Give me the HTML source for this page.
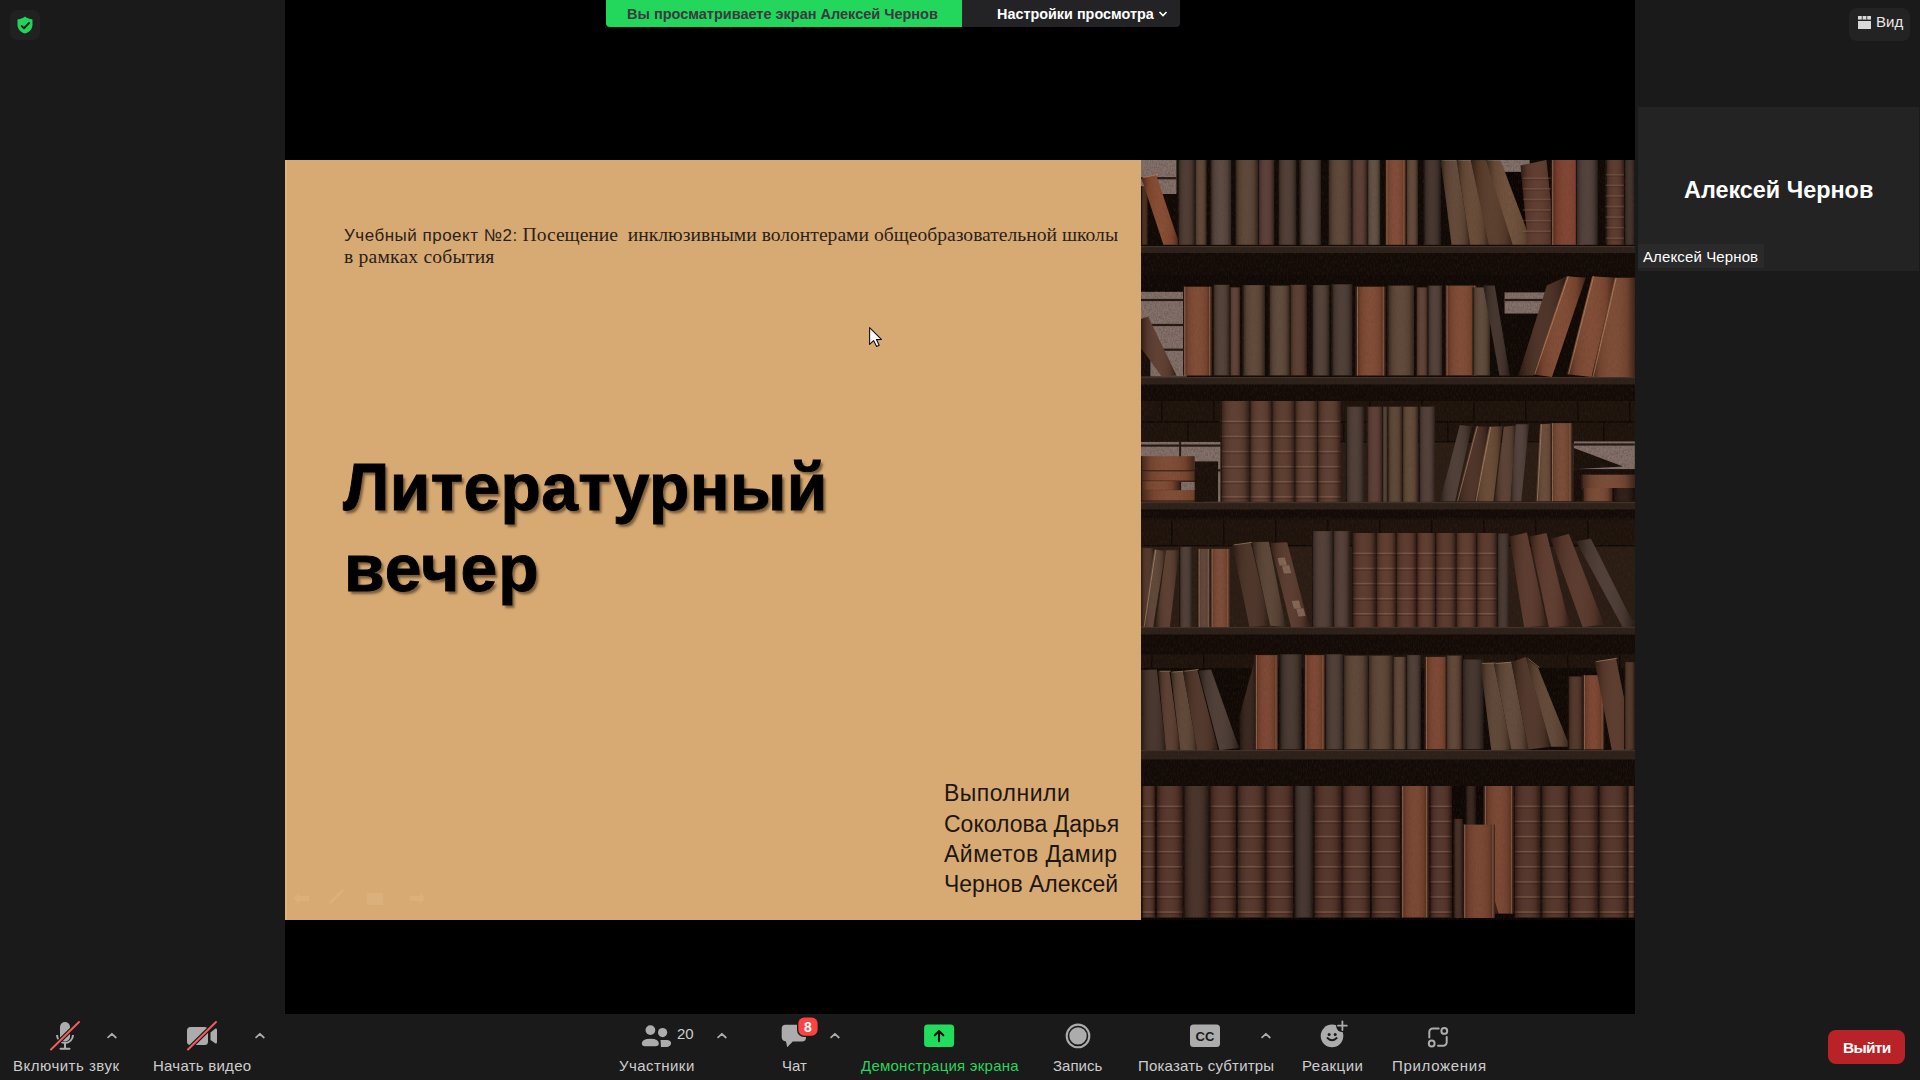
<!DOCTYPE html>
<html><head><meta charset="utf-8">
<style>
*{margin:0;padding:0;box-sizing:border-box}
html,body{width:1920px;height:1080px;overflow:hidden;background:#1a1a1a;font-family:"Liberation Sans",sans-serif}
.abs{position:absolute}
.t{position:absolute;white-space:nowrap;line-height:1}
#screen{left:285px;top:0;width:1350px;height:1014px;background:#000}
#slide{left:285px;top:160px;width:856px;height:760px;background:#d7aa73}
#shelf{left:1141px;top:160px;width:494px;height:760px;background:#2a1c14;overflow:hidden}
.lbl{color:#cdcdcd;font-size:15px}
</style></head><body>

<!-- shield -->
<div class="abs" style="left:10px;top:10px;width:30px;height:30px;border-radius:7px;background:#212121"></div>
<svg class="abs" style="left:16px;top:16px" width="18" height="18" viewBox="0 0 18 18">
<path d="M9 0.6 C7.5 2 5 3.2 1.5 3.5 V8.5 C1.5 13 4.5 16 9 17.6 C13.5 16 16.5 13 16.5 8.5 V3.5 C13 3.2 10.5 2 9 0.6 Z" fill="#23d45a"/>
<path d="M5.7 10 L8 12.2 L13 7" stroke="#1f1f1f" stroke-width="2" fill="none" stroke-linecap="round" stroke-linejoin="round"/>
</svg>

<div id="screen" class="abs"></div>
<div id="slide" class="abs"></div>
<div class="abs" style="left:285px;top:160px;width:2px;height:760px;background:#e2b47a"></div>
<div id="shelf" class="abs"><!--SHELF--><svg width="494" height="760" viewBox="0 0 494 760"><defs><filter id="nz" x="0" y="0" width="100%" height="100%"><feTurbulence type="fractalNoise" baseFrequency="0.8 0.25" numOctaves="2" seed="7"/><feColorMatrix type="matrix" values="0 0 0 0 .08  0 0 0 0 .04  0 0 0 0 .02  -1.2 0 0 0 .75"/></filter><filter id="sp" x="0" y="0" width="100%" height="100%"><feTurbulence type="fractalNoise" baseFrequency="0.55" numOctaves="2" seed="3"/><feColorMatrix type="matrix" values="0 0 0 0 .12  0 0 0 0 .07  0 0 0 0 .05  -2.2 0 0 0 1.25"/></filter><linearGradient id="sh" x1="0" x2="1" y1="0" y2="0"><stop offset="0" stop-color="#000" stop-opacity=".5"/><stop offset=".18" stop-color="#000" stop-opacity=".08"/><stop offset=".5" stop-color="#fff" stop-opacity=".03"/><stop offset=".82" stop-color="#000" stop-opacity=".08"/><stop offset="1" stop-color="#000" stop-opacity=".5"/></linearGradient></defs><rect x="0.0" y="0.0" width="494.0" height="86.0" fill="#0f0805"/><rect x="0.0" y="-0.1" width="35.4" height="34.1" fill="#84726d"/><rect x="0.0" y="-0.1" width="35.4" height="34.1" filter="url(#sp)" opacity=".55"/><rect x="0.0" y="17.1" width="35.4" height="2.2" fill="#241814"/><rect x="0.0" y="26.2" width="6.8" height="58.6" fill="#442a1f"/><rect x="0.0" y="26.2" width="6.8" height="58.6" fill="url(#sh)"/><rect x="0.0" y="26.2" width="1.0" height="58.6" fill="#080403" opacity="0.55"/><polygon points="0.3,17.7 15.1,14.5 38.6,84.8 22.4,84.8" fill="#87492f"/><polygon points="0.3,17.7 15.1,14.5 38.6,84.8 22.4,84.8" fill="url(#sh)"/><line x1="1.8" y1="17.7" x2="16.6" y2="14.5" stroke="#d8b890" stroke-width="1" opacity=".45"/><rect x="36.8" y="-0.1" width="16.9" height="84.9" fill="#4b3930"/><rect x="36.8" y="-0.1" width="16.9" height="84.9" fill="url(#sh)"/><rect x="36.8" y="-0.1" width="1.0" height="84.9" fill="#080403" opacity="0.55"/><rect x="53.7" y="-0.1" width="11.7" height="84.9" fill="#5d4435"/><rect x="53.7" y="-0.1" width="11.7" height="84.9" fill="url(#sh)"/><rect x="53.7" y="-0.1" width="1.0" height="84.9" fill="#080403" opacity="0.55"/><rect x="69.3" y="-0.1" width="20.8" height="84.9" fill="#58463f"/><rect x="69.3" y="-0.1" width="20.8" height="84.9" fill="url(#sh)"/><rect x="69.3" y="-0.1" width="1.0" height="84.9" fill="#080403" opacity="0.55"/><rect x="94.1" y="-0.1" width="22.9" height="84.9" fill="#5b4435"/><rect x="94.1" y="-0.1" width="22.9" height="84.9" fill="url(#sh)"/><rect x="94.1" y="-0.1" width="1.0" height="84.9" fill="#080403" opacity="0.55"/><rect x="117.0" y="-0.1" width="16.1" height="84.9" fill="#583c35"/><rect x="117.0" y="-0.1" width="16.1" height="84.9" fill="url(#sh)"/><rect x="117.0" y="-0.1" width="1.0" height="84.9" fill="#080403" opacity="0.55"/><rect x="137.0" y="-0.1" width="18.2" height="84.9" fill="#4d3b33"/><rect x="137.0" y="-0.1" width="18.2" height="84.9" fill="url(#sh)"/><rect x="137.0" y="-0.1" width="1.0" height="84.9" fill="#080403" opacity="0.55"/><rect x="158.4" y="-0.1" width="21.4" height="84.9" fill="#56443c"/><rect x="158.4" y="-0.1" width="21.4" height="84.9" fill="url(#sh)"/><rect x="158.4" y="-0.1" width="1.0" height="84.9" fill="#080403" opacity="0.55"/><rect x="187.0" y="-0.1" width="23.4" height="84.9" fill="#5b4435"/><rect x="187.0" y="-0.1" width="23.4" height="84.9" fill="url(#sh)"/><rect x="187.0" y="-0.1" width="1.0" height="84.9" fill="#080403" opacity="0.55"/><rect x="210.5" y="-0.1" width="15.6" height="84.9" fill="#583c32"/><rect x="210.5" y="-0.1" width="15.6" height="84.9" fill="url(#sh)"/><rect x="210.5" y="-0.1" width="1.0" height="84.9" fill="#080403" opacity="0.55"/><rect x="226.1" y="-0.1" width="13.0" height="84.9" fill="#604e43"/><rect x="226.1" y="-0.1" width="13.0" height="84.9" fill="url(#sh)"/><rect x="226.1" y="-0.1" width="1.0" height="84.9" fill="#080403" opacity="0.55"/><rect x="244.1" y="-0.1" width="20.8" height="84.9" fill="#804932"/><rect x="244.1" y="-0.1" width="20.8" height="84.9" fill="url(#sh)"/><rect x="245.3" y="-0.1" width="1.2" height="84.9" fill="#be9678" opacity="0.5"/><rect x="262.3" y="-0.1" width="1.2" height="84.9" fill="#be9678" opacity="0.4"/><rect x="244.1" y="-0.1" width="1.0" height="84.9" fill="#080403" opacity="0.55"/><rect x="264.9" y="-0.1" width="12.0" height="84.9" fill="#604635"/><rect x="264.9" y="-0.1" width="12.0" height="84.9" fill="url(#sh)"/><rect x="264.9" y="-0.1" width="1.0" height="84.9" fill="#080403" opacity="0.55"/><rect x="282.3" y="-0.1" width="17.4" height="84.9" fill="#41312b"/><rect x="282.3" y="-0.1" width="17.4" height="84.9" fill="url(#sh)"/><rect x="282.3" y="-0.1" width="1.0" height="84.9" fill="#080403" opacity="0.55"/><rect x="357.9" y="-0.1" width="30.7" height="12.0" fill="#84726d"/><rect x="357.9" y="-0.1" width="30.7" height="12.0" filter="url(#sp)" opacity=".55"/><polygon points="358.4,11.9 388.6,11.9 388.6,84.8 374.0,84.8" fill="#0a0403"/><polygon points="299.8,-0.1 315.7,-0.1 329.2,84.8 310.5,84.8" fill="#604635"/><polygon points="299.8,-0.1 315.7,-0.1 329.2,84.8 310.5,84.8" fill="url(#sh)"/><line x1="301.3" y1="-0.1" x2="317.2" y2="-0.1" stroke="#d8b890" stroke-width="1" opacity=".45"/><polygon points="315.7,-0.1 331.6,-0.1 347.7,84.8 329.2,84.8" fill="#664935"/><polygon points="315.7,-0.1 331.6,-0.1 347.7,84.8 329.2,84.8" fill="url(#sh)"/><line x1="317.2" y1="-0.1" x2="333.1" y2="-0.1" stroke="#d8b890" stroke-width="1" opacity=".45"/><polygon points="329.7,-0.1 345.6,-0.1 373.0,84.8 347.7,84.8" fill="#583b2a"/><polygon points="329.7,-0.1 345.6,-0.1 373.0,84.8 347.7,84.8" fill="url(#sh)"/><polygon points="344.8,-0.1 359.4,-0.1 391.4,84.8 371.7,84.8" fill="#6d4e39"/><polygon points="344.8,-0.1 359.4,-0.1 391.4,84.8 371.7,84.8" fill="url(#sh)"/><line x1="346.3" y1="-0.1" x2="360.9" y2="-0.1" stroke="#d8b890" stroke-width="1" opacity=".45"/><polygon points="379.5,5.4 405.5,-0.1 414.1,84.8 387.0,84.8" fill="#5d392d"/><polygon points="379.5,5.4 405.5,-0.1 414.1,84.8 387.0,84.8" fill="url(#sh)"/><rect x="381.8" y="17.4" width="31.2" height="1.6" fill="#9a765e" opacity="0.3"/><rect x="381.8" y="19.0" width="31.2" height="1.4" fill="#160b06" opacity="0.15"/><rect x="381.8" y="28.0" width="31.2" height="1.6" fill="#9a765e" opacity="0.3"/><rect x="381.8" y="29.6" width="31.2" height="1.4" fill="#160b06" opacity="0.15"/><rect x="381.8" y="38.6" width="31.2" height="1.6" fill="#9a765e" opacity="0.3"/><rect x="381.8" y="40.2" width="31.2" height="1.4" fill="#160b06" opacity="0.15"/><rect x="381.8" y="49.2" width="31.2" height="1.6" fill="#9a765e" opacity="0.3"/><rect x="381.8" y="50.8" width="31.2" height="1.4" fill="#160b06" opacity="0.15"/><rect x="381.8" y="59.8" width="31.2" height="1.6" fill="#9a765e" opacity="0.3"/><rect x="381.8" y="61.4" width="31.2" height="1.4" fill="#160b06" opacity="0.15"/><rect x="381.8" y="70.4" width="31.2" height="1.6" fill="#9a765e" opacity="0.3"/><rect x="381.8" y="72.0" width="31.2" height="1.4" fill="#160b06" opacity="0.15"/><rect x="409.9" y="-0.1" width="33.1" height="84.9" fill="#80412f"/><rect x="409.9" y="-0.1" width="33.1" height="84.9" fill="url(#sh)"/><rect x="411.1" y="-0.1" width="1.2" height="84.9" fill="#be9678" opacity="0.5"/><rect x="440.4" y="-0.1" width="1.2" height="84.9" fill="#be9678" opacity="0.4"/><rect x="409.9" y="-0.1" width="1.0" height="84.9" fill="#080403" opacity="0.55"/><rect x="434.9" y="-0.1" width="21.6" height="84.9" fill="#4f3e39"/><rect x="434.9" y="-0.1" width="21.6" height="84.9" fill="url(#sh)"/><rect x="434.9" y="-0.1" width="1.0" height="84.9" fill="#080403" opacity="0.55"/><rect x="464.6" y="-0.1" width="18.5" height="84.9" fill="#59372b"/><rect x="464.6" y="-0.1" width="18.5" height="84.9" fill="url(#sh)"/><rect x="464.6" y="-0.1" width="1.0" height="84.9" fill="#080403" opacity="0.55"/><rect x="464.6" y="13.9" width="18.5" height="1.6" fill="#9a765e" opacity="0.3"/><rect x="464.6" y="15.5" width="18.5" height="1.4" fill="#160b06" opacity="0.15"/><rect x="464.6" y="24.5" width="18.5" height="1.6" fill="#9a765e" opacity="0.3"/><rect x="464.6" y="26.1" width="18.5" height="1.4" fill="#160b06" opacity="0.15"/><rect x="464.6" y="35.1" width="18.5" height="1.6" fill="#9a765e" opacity="0.3"/><rect x="464.6" y="36.7" width="18.5" height="1.4" fill="#160b06" opacity="0.15"/><rect x="464.6" y="45.7" width="18.5" height="1.6" fill="#9a765e" opacity="0.3"/><rect x="464.6" y="47.3" width="18.5" height="1.4" fill="#160b06" opacity="0.15"/><rect x="464.6" y="56.3" width="18.5" height="1.6" fill="#9a765e" opacity="0.3"/><rect x="464.6" y="57.9" width="18.5" height="1.4" fill="#160b06" opacity="0.15"/><rect x="464.6" y="66.9" width="18.5" height="1.6" fill="#9a765e" opacity="0.3"/><rect x="464.6" y="68.5" width="18.5" height="1.4" fill="#160b06" opacity="0.15"/><rect x="464.6" y="77.5" width="18.5" height="1.6" fill="#9a765e" opacity="0.3"/><rect x="464.6" y="79.1" width="18.5" height="1.4" fill="#160b06" opacity="0.15"/><rect x="483.1" y="-0.1" width="10.7" height="84.9" fill="#3d2d28"/><rect x="483.1" y="-0.1" width="10.7" height="84.9" fill="url(#sh)"/><rect x="483.1" y="-0.1" width="1.0" height="84.9" fill="#080403" opacity="0.55"/><rect x="0.0" y="86.0" width="494.0" height="7.0" fill="#2c201a"/><rect x="0.0" y="86.0" width="494.0" height="1.2" fill="#413128"/><rect x="0.0" y="93.0" width="494.0" height="22.0" fill="#120a07"/><rect x="0.0" y="115.0" width="494.0" height="102.0" fill="#0f0805"/><rect x="0.0" y="131.9" width="45.8" height="84.6" fill="#84726d"/><rect x="0.0" y="131.9" width="45.8" height="84.6" filter="url(#sp)" opacity=".55"/><rect x="0.0" y="138.9" width="45.8" height="2.2" fill="#241814"/><rect x="0.0" y="163.9" width="45.8" height="2.2" fill="#241814"/><rect x="0.0" y="188.6" width="45.8" height="2.2" fill="#241814"/><rect x="0.0" y="177.7" width="9.4" height="38.8" fill="#160d0a"/><polygon points="0.0,159.0 7.1,156.6 35.5,215.5 20.9,216.8 0.0,188.1" fill="#5d3c2f"/><polygon points="0.0,159.0 7.1,156.6 35.5,215.5 20.9,216.8 0.0,188.1" fill="url(#sh)"/><rect x="42.0" y="126.7" width="28.6" height="88.8" fill="#804932"/><rect x="42.0" y="126.7" width="28.6" height="88.8" fill="url(#sh)"/><rect x="43.2" y="126.7" width="1.2" height="88.8" fill="#be9678" opacity="0.5"/><rect x="68.0" y="126.7" width="1.2" height="88.8" fill="#be9678" opacity="0.4"/><rect x="42.0" y="126.7" width="1.0" height="88.8" fill="#080403" opacity="0.55"/><rect x="71.9" y="124.8" width="16.7" height="90.6" fill="#4f3e34"/><rect x="71.9" y="124.8" width="16.7" height="90.6" fill="url(#sh)"/><rect x="71.9" y="124.8" width="1.0" height="90.6" fill="#080403" opacity="0.55"/><rect x="88.6" y="127.4" width="10.4" height="88.0" fill="#5d3f34"/><rect x="88.6" y="127.4" width="10.4" height="88.0" fill="url(#sh)"/><rect x="88.6" y="127.4" width="1.0" height="88.0" fill="#080403" opacity="0.55"/><rect x="101.6" y="125.1" width="22.1" height="90.4" fill="#5d4637"/><rect x="101.6" y="125.1" width="22.1" height="90.4" fill="url(#sh)"/><rect x="101.6" y="125.1" width="1.0" height="90.4" fill="#080403" opacity="0.55"/><rect x="127.9" y="125.6" width="20.8" height="89.8" fill="#5d483a"/><rect x="127.9" y="125.6" width="20.8" height="89.8" fill="url(#sh)"/><rect x="127.9" y="125.6" width="1.0" height="89.8" fill="#080403" opacity="0.55"/><rect x="148.7" y="124.8" width="16.9" height="90.6" fill="#593b2f"/><rect x="148.7" y="124.8" width="16.9" height="90.6" fill="url(#sh)"/><rect x="148.7" y="124.8" width="1.0" height="90.6" fill="#080403" opacity="0.55"/><rect x="170.9" y="125.1" width="17.4" height="90.4" fill="#4f3e34"/><rect x="170.9" y="125.1" width="17.4" height="90.4" fill="url(#sh)"/><rect x="170.9" y="125.1" width="1.0" height="90.4" fill="#080403" opacity="0.55"/><rect x="190.4" y="124.3" width="20.8" height="91.1" fill="#4b3b34"/><rect x="190.4" y="124.3" width="20.8" height="91.1" fill="url(#sh)"/><rect x="190.4" y="124.3" width="1.0" height="91.1" fill="#080403" opacity="0.55"/><rect x="214.6" y="126.7" width="29.7" height="88.8" fill="#804932"/><rect x="214.6" y="126.7" width="29.7" height="88.8" fill="url(#sh)"/><rect x="215.8" y="126.7" width="1.2" height="88.8" fill="#be9678" opacity="0.5"/><rect x="241.7" y="126.7" width="1.2" height="88.8" fill="#be9678" opacity="0.4"/><rect x="214.6" y="126.7" width="1.0" height="88.8" fill="#080403" opacity="0.55"/><rect x="246.4" y="125.6" width="26.6" height="89.8" fill="#5d4637"/><rect x="246.4" y="125.6" width="26.6" height="89.8" fill="url(#sh)"/><rect x="246.4" y="125.6" width="1.0" height="89.8" fill="#080403" opacity="0.55"/><rect x="275.0" y="127.4" width="11.5" height="88.0" fill="#5d3f34"/><rect x="275.0" y="127.4" width="11.5" height="88.0" fill="url(#sh)"/><rect x="275.0" y="127.4" width="1.0" height="88.0" fill="#080403" opacity="0.55"/><rect x="286.5" y="125.6" width="14.6" height="89.8" fill="#4f3e37"/><rect x="286.5" y="125.6" width="14.6" height="89.8" fill="url(#sh)"/><rect x="286.5" y="125.6" width="1.0" height="89.8" fill="#080403" opacity="0.55"/><rect x="304.2" y="125.6" width="31.2" height="89.8" fill="#804932"/><rect x="304.2" y="125.6" width="31.2" height="89.8" fill="url(#sh)"/><rect x="305.4" y="125.6" width="1.2" height="89.8" fill="#be9678" opacity="0.5"/><rect x="332.9" y="125.6" width="1.2" height="89.8" fill="#be9678" opacity="0.4"/><rect x="304.2" y="125.6" width="1.0" height="89.8" fill="#080403" opacity="0.55"/><rect x="331.6" y="127.4" width="17.4" height="88.0" fill="#5d4839"/><rect x="331.6" y="127.4" width="17.4" height="88.0" fill="url(#sh)"/><rect x="331.6" y="127.4" width="1.0" height="88.0" fill="#080403" opacity="0.55"/><polygon points="342.2,125.6 353.7,125.6 368.8,215.5 358.4,215.5" fill="#41312b"/><polygon points="342.2,125.6 353.7,125.6 368.8,215.5 358.4,215.5" fill="url(#sh)"/><rect x="363.6" y="132.4" width="41.1" height="21.1" fill="#84726d"/><rect x="363.6" y="132.4" width="41.1" height="21.1" filter="url(#sp)" opacity=".55"/><rect x="363.6" y="138.9" width="41.1" height="2.2" fill="#241814"/><polygon points="377.4,215.5 405.8,125.6 425.8,116.2 392.2,215.5" fill="#4a2f24"/><polygon points="377.4,215.5 405.8,125.6 425.8,116.2 392.2,215.5" fill="url(#sh)"/><polygon points="392.2,214.4 425.8,116.2 444.6,117.8 411.0,217.0" fill="#804932"/><polygon points="392.2,214.4 425.8,116.2 444.6,117.8 411.0,217.0" fill="url(#sh)"/><line x1="393.7" y1="214.4" x2="427.3" y2="116.2" stroke="#d8b890" stroke-width="1" opacity=".45"/><polygon points="426.1,214.2 451.1,116.2 473.7,117.8 450.6,217.0" fill="#804932"/><polygon points="426.1,214.2 451.1,116.2 473.7,117.8 450.6,217.0" fill="url(#sh)"/><line x1="427.6" y1="214.2" x2="452.6" y2="116.2" stroke="#d8b890" stroke-width="1" opacity=".45"/><polygon points="450.6,217.0 473.7,117.8 493.8,117.8 493.8,217.0" fill="#7c4932"/><polygon points="450.6,217.0 473.7,117.8 493.8,117.8 493.8,217.0" fill="url(#sh)"/><line x1="452.1" y1="217.0" x2="475.2" y2="117.8" stroke="#d8b890" stroke-width="1" opacity=".45"/><rect x="0.0" y="217.0" width="494.0" height="7.5" fill="#2c201a"/><rect x="0.0" y="217.0" width="494.0" height="1.2" fill="#413128"/><rect x="0.0" y="224.5" width="494.0" height="16.5" fill="#120a07"/><rect x="0.0" y="241.0" width="494.0" height="41.0" fill="#180e0b"/><rect x="0.0" y="241.0" width="494.0" height="20.0" fill="#1d120c"/><rect x="20.0" y="241.0" width="1.5" height="20.0" fill="#0f0805"/><rect x="72.0" y="241.0" width="1.5" height="20.0" fill="#0f0805"/><rect x="124.0" y="241.0" width="1.5" height="20.0" fill="#0f0805"/><rect x="176.0" y="241.0" width="1.5" height="20.0" fill="#0f0805"/><rect x="228.0" y="241.0" width="1.5" height="20.0" fill="#0f0805"/><rect x="280.0" y="241.0" width="1.5" height="20.0" fill="#0f0805"/><rect x="332.0" y="241.0" width="1.5" height="20.0" fill="#0f0805"/><rect x="384.0" y="241.0" width="1.5" height="20.0" fill="#0f0805"/><rect x="436.0" y="241.0" width="1.5" height="20.0" fill="#0f0805"/><rect x="488.0" y="241.0" width="1.5" height="20.0" fill="#0f0805"/><rect x="0.0" y="261.0" width="494.0" height="1.5" fill="#0f0805"/><rect x="0.0" y="263.0" width="494.0" height="18.0" fill="#1d120c"/><rect x="46.0" y="263.0" width="1.5" height="18.0" fill="#0f0805"/><rect x="98.0" y="263.0" width="1.5" height="18.0" fill="#0f0805"/><rect x="150.0" y="263.0" width="1.5" height="18.0" fill="#0f0805"/><rect x="202.0" y="263.0" width="1.5" height="18.0" fill="#0f0805"/><rect x="254.0" y="263.0" width="1.5" height="18.0" fill="#0f0805"/><rect x="306.0" y="263.0" width="1.5" height="18.0" fill="#0f0805"/><rect x="358.0" y="263.0" width="1.5" height="18.0" fill="#0f0805"/><rect x="410.0" y="263.0" width="1.5" height="18.0" fill="#0f0805"/><rect x="462.0" y="263.0" width="1.5" height="18.0" fill="#0f0805"/><rect x="0.0" y="281.0" width="494.0" height="1.5" fill="#0f0805"/><rect x="0.0" y="281.9" width="79.7" height="59.9" fill="#84726d"/><rect x="0.0" y="281.9" width="79.7" height="59.9" filter="url(#sp)" opacity=".55"/><rect x="0.0" y="284.5" width="79.7" height="2.2" fill="#241814"/><rect x="0.0" y="309.2" width="79.7" height="2.2" fill="#241814"/><rect x="38.1" y="281.9" width="2.0" height="59.9" fill="#241814"/><rect x="0.0" y="296.2" width="53.6" height="15.4" fill="#804932"/><rect x="0.0" y="296.2" width="53.6" height="15.4" fill="url(#sh)"/><rect x="0.0" y="296.2" width="1.0" height="15.4" fill="#080403" opacity="0.55"/><rect x="0.0" y="310.1" width="53.6" height="1.5" fill="#24130d" opacity="0.7"/><rect x="0.0" y="311.6" width="56.2" height="10.4" fill="#804932"/><rect x="0.0" y="311.6" width="56.2" height="10.4" fill="url(#sh)"/><rect x="0.0" y="311.6" width="1.0" height="10.4" fill="#080403" opacity="0.55"/><rect x="0.0" y="320.5" width="56.2" height="1.5" fill="#24130d" opacity="0.7"/><rect x="0.0" y="321.2" width="38.0" height="10.2" fill="#804932"/><rect x="0.0" y="321.2" width="38.0" height="10.2" fill="url(#sh)"/><rect x="0.0" y="321.2" width="1.0" height="10.2" fill="#080403" opacity="0.55"/><rect x="0.0" y="329.9" width="38.0" height="1.5" fill="#24130d" opacity="0.7"/><rect x="0.0" y="330.1" width="62.8" height="11.7" fill="#804932"/><rect x="0.0" y="330.1" width="62.8" height="11.7" fill="url(#sh)"/><rect x="0.0" y="330.1" width="1.0" height="11.7" fill="#080403" opacity="0.55"/><rect x="0.0" y="340.3" width="62.8" height="1.5" fill="#24130d" opacity="0.7"/><rect x="53.7" y="301.4" width="23.4" height="40.4" fill="#1a100b"/><rect x="79.7" y="241.0" width="28.6" height="100.8" fill="#5b3b2f"/><rect x="79.7" y="260.6" width="28.6" height="1.6" fill="#9a765e" opacity="0.45"/><rect x="79.7" y="262.2" width="28.6" height="1.4" fill="#160b06" opacity="0.225"/><rect x="79.7" y="275.7" width="28.6" height="1.6" fill="#9a765e" opacity="0.45"/><rect x="79.7" y="277.3" width="28.6" height="1.4" fill="#160b06" opacity="0.225"/><rect x="79.7" y="290.8" width="28.6" height="1.6" fill="#9a765e" opacity="0.45"/><rect x="79.7" y="292.4" width="28.6" height="1.4" fill="#160b06" opacity="0.225"/><rect x="79.7" y="305.9" width="28.6" height="1.6" fill="#9a765e" opacity="0.45"/><rect x="79.7" y="307.5" width="28.6" height="1.4" fill="#160b06" opacity="0.225"/><rect x="79.7" y="321.0" width="28.6" height="1.6" fill="#9a765e" opacity="0.45"/><rect x="79.7" y="322.6" width="28.6" height="1.4" fill="#160b06" opacity="0.225"/><rect x="79.7" y="336.1" width="28.6" height="1.6" fill="#9a765e" opacity="0.45"/><rect x="79.7" y="337.7" width="28.6" height="1.4" fill="#160b06" opacity="0.225"/><rect x="79.7" y="241.0" width="28.6" height="100.8" fill="url(#sh)"/><rect x="79.7" y="241.0" width="1.0" height="100.8" fill="#080403" opacity="0.55"/><rect x="108.4" y="241.0" width="22.1" height="100.8" fill="#5d3c30"/><rect x="108.4" y="260.6" width="22.1" height="1.6" fill="#9a765e" opacity="0.45"/><rect x="108.4" y="262.2" width="22.1" height="1.4" fill="#160b06" opacity="0.225"/><rect x="108.4" y="275.7" width="22.1" height="1.6" fill="#9a765e" opacity="0.45"/><rect x="108.4" y="277.3" width="22.1" height="1.4" fill="#160b06" opacity="0.225"/><rect x="108.4" y="290.8" width="22.1" height="1.6" fill="#9a765e" opacity="0.45"/><rect x="108.4" y="292.4" width="22.1" height="1.4" fill="#160b06" opacity="0.225"/><rect x="108.4" y="305.9" width="22.1" height="1.6" fill="#9a765e" opacity="0.45"/><rect x="108.4" y="307.5" width="22.1" height="1.4" fill="#160b06" opacity="0.225"/><rect x="108.4" y="321.0" width="22.1" height="1.6" fill="#9a765e" opacity="0.45"/><rect x="108.4" y="322.6" width="22.1" height="1.4" fill="#160b06" opacity="0.225"/><rect x="108.4" y="336.1" width="22.1" height="1.6" fill="#9a765e" opacity="0.45"/><rect x="108.4" y="337.7" width="22.1" height="1.4" fill="#160b06" opacity="0.225"/><rect x="108.4" y="241.0" width="22.1" height="100.8" fill="url(#sh)"/><rect x="108.4" y="241.0" width="1.0" height="100.8" fill="#080403" opacity="0.55"/><rect x="130.5" y="241.0" width="22.9" height="100.8" fill="#59392d"/><rect x="130.5" y="260.6" width="22.9" height="1.6" fill="#9a765e" opacity="0.45"/><rect x="130.5" y="262.2" width="22.9" height="1.4" fill="#160b06" opacity="0.225"/><rect x="130.5" y="275.7" width="22.9" height="1.6" fill="#9a765e" opacity="0.45"/><rect x="130.5" y="277.3" width="22.9" height="1.4" fill="#160b06" opacity="0.225"/><rect x="130.5" y="290.8" width="22.9" height="1.6" fill="#9a765e" opacity="0.45"/><rect x="130.5" y="292.4" width="22.9" height="1.4" fill="#160b06" opacity="0.225"/><rect x="130.5" y="305.9" width="22.9" height="1.6" fill="#9a765e" opacity="0.45"/><rect x="130.5" y="307.5" width="22.9" height="1.4" fill="#160b06" opacity="0.225"/><rect x="130.5" y="321.0" width="22.9" height="1.6" fill="#9a765e" opacity="0.45"/><rect x="130.5" y="322.6" width="22.9" height="1.4" fill="#160b06" opacity="0.225"/><rect x="130.5" y="336.1" width="22.9" height="1.6" fill="#9a765e" opacity="0.45"/><rect x="130.5" y="337.7" width="22.9" height="1.4" fill="#160b06" opacity="0.225"/><rect x="130.5" y="241.0" width="22.9" height="100.8" fill="url(#sh)"/><rect x="130.5" y="241.0" width="1.0" height="100.8" fill="#080403" opacity="0.55"/><rect x="153.4" y="241.0" width="22.7" height="100.8" fill="#5d3c30"/><rect x="153.4" y="260.6" width="22.7" height="1.6" fill="#9a765e" opacity="0.45"/><rect x="153.4" y="262.2" width="22.7" height="1.4" fill="#160b06" opacity="0.225"/><rect x="153.4" y="275.7" width="22.7" height="1.6" fill="#9a765e" opacity="0.45"/><rect x="153.4" y="277.3" width="22.7" height="1.4" fill="#160b06" opacity="0.225"/><rect x="153.4" y="290.8" width="22.7" height="1.6" fill="#9a765e" opacity="0.45"/><rect x="153.4" y="292.4" width="22.7" height="1.4" fill="#160b06" opacity="0.225"/><rect x="153.4" y="305.9" width="22.7" height="1.6" fill="#9a765e" opacity="0.45"/><rect x="153.4" y="307.5" width="22.7" height="1.4" fill="#160b06" opacity="0.225"/><rect x="153.4" y="321.0" width="22.7" height="1.6" fill="#9a765e" opacity="0.45"/><rect x="153.4" y="322.6" width="22.7" height="1.4" fill="#160b06" opacity="0.225"/><rect x="153.4" y="336.1" width="22.7" height="1.6" fill="#9a765e" opacity="0.45"/><rect x="153.4" y="337.7" width="22.7" height="1.4" fill="#160b06" opacity="0.225"/><rect x="153.4" y="241.0" width="22.7" height="100.8" fill="url(#sh)"/><rect x="153.4" y="241.0" width="1.0" height="100.8" fill="#080403" opacity="0.55"/><rect x="176.1" y="241.0" width="23.4" height="100.8" fill="#5b3b2f"/><rect x="176.1" y="260.6" width="23.4" height="1.6" fill="#9a765e" opacity="0.45"/><rect x="176.1" y="262.2" width="23.4" height="1.4" fill="#160b06" opacity="0.225"/><rect x="176.1" y="275.7" width="23.4" height="1.6" fill="#9a765e" opacity="0.45"/><rect x="176.1" y="277.3" width="23.4" height="1.4" fill="#160b06" opacity="0.225"/><rect x="176.1" y="290.8" width="23.4" height="1.6" fill="#9a765e" opacity="0.45"/><rect x="176.1" y="292.4" width="23.4" height="1.4" fill="#160b06" opacity="0.225"/><rect x="176.1" y="305.9" width="23.4" height="1.6" fill="#9a765e" opacity="0.45"/><rect x="176.1" y="307.5" width="23.4" height="1.4" fill="#160b06" opacity="0.225"/><rect x="176.1" y="321.0" width="23.4" height="1.6" fill="#9a765e" opacity="0.45"/><rect x="176.1" y="322.6" width="23.4" height="1.4" fill="#160b06" opacity="0.225"/><rect x="176.1" y="336.1" width="23.4" height="1.6" fill="#9a765e" opacity="0.45"/><rect x="176.1" y="337.7" width="23.4" height="1.4" fill="#160b06" opacity="0.225"/><rect x="176.1" y="241.0" width="23.4" height="100.8" fill="url(#sh)"/><rect x="176.1" y="241.0" width="1.0" height="100.8" fill="#080403" opacity="0.55"/><rect x="204.7" y="246.7" width="18.2" height="95.1" fill="#4b3b34"/><rect x="204.7" y="246.7" width="18.2" height="95.1" fill="url(#sh)"/><rect x="204.7" y="246.7" width="1.0" height="95.1" fill="#080403" opacity="0.55"/><rect x="225.6" y="246.7" width="15.6" height="95.1" fill="#593c34"/><rect x="225.6" y="246.7" width="15.6" height="95.1" fill="url(#sh)"/><rect x="225.6" y="246.7" width="1.0" height="95.1" fill="#080403" opacity="0.55"/><rect x="241.2" y="246.7" width="5.2" height="95.1" fill="#523c32"/><rect x="241.2" y="246.7" width="5.2" height="95.1" fill="url(#sh)"/><rect x="241.2" y="246.7" width="1.0" height="95.1" fill="#080403" opacity="0.55"/><rect x="246.4" y="246.7" width="14.6" height="95.1" fill="#5b4435"/><rect x="246.4" y="246.7" width="14.6" height="95.1" fill="url(#sh)"/><rect x="246.4" y="246.7" width="1.0" height="95.1" fill="#080403" opacity="0.55"/><rect x="261.0" y="246.7" width="15.9" height="95.1" fill="#604835"/><rect x="261.0" y="246.7" width="15.9" height="95.1" fill="url(#sh)"/><rect x="261.0" y="246.7" width="1.0" height="95.1" fill="#080403" opacity="0.55"/><rect x="277.9" y="246.7" width="15.9" height="95.1" fill="#4f3c37"/><rect x="277.9" y="246.7" width="15.9" height="95.1" fill="url(#sh)"/><rect x="277.9" y="246.7" width="1.0" height="95.1" fill="#080403" opacity="0.55"/><polygon points="299.0,341.2 318.8,264.9 330.8,266.2 314.1,341.2" fill="#4b3b34"/><polygon points="299.0,341.2 318.8,264.9 330.8,266.2 314.1,341.2" fill="url(#sh)"/><polygon points="315.1,341.2 334.9,266.2 348.2,266.8 333.6,341.2" fill="#4a2f24"/><polygon points="315.1,341.2 334.9,266.2 348.2,266.8 333.6,341.2" fill="url(#sh)"/><line x1="316.6" y1="341.2" x2="336.4" y2="266.2" stroke="#d8b890" stroke-width="1" opacity=".45"/><polygon points="333.6,341.2 348.2,266.8 361.5,266.2 352.4,341.2" fill="#674934"/><polygon points="333.6,341.2 348.2,266.8 361.5,266.2 352.4,341.2" fill="url(#sh)"/><line x1="335.1" y1="341.2" x2="349.7" y2="266.8" stroke="#d8b890" stroke-width="1" opacity=".45"/><polygon points="353.7,341.2 362.8,266.8 374.8,265.5 369.6,341.2" fill="#593e32"/><polygon points="353.7,341.2 362.8,266.8 374.8,265.5 369.6,341.2" fill="url(#sh)"/><polygon points="369.6,341.2 374.8,264.2 388.1,264.2 380.2,341.2" fill="#4f3e39"/><polygon points="369.6,341.2 374.8,264.2 388.1,264.2 380.2,341.2" fill="url(#sh)"/><polygon points="394.8,341.2 399.0,264.2 412.3,263.6 411.0,341.2" fill="#674935"/><polygon points="394.8,341.2 399.0,264.2 412.3,263.6 411.0,341.2" fill="url(#sh)"/><line x1="396.3" y1="341.2" x2="400.5" y2="264.2" stroke="#d8b890" stroke-width="1" opacity=".45"/><rect x="409.7" y="263.1" width="21.4" height="78.1" fill="#794934"/><rect x="409.7" y="263.1" width="21.4" height="78.1" fill="url(#sh)"/><rect x="410.9" y="263.1" width="1.2" height="78.1" fill="#be9678" opacity="0.5"/><rect x="428.4" y="263.1" width="1.2" height="78.1" fill="#be9678" opacity="0.4"/><rect x="409.7" y="263.1" width="1.0" height="78.1" fill="#080403" opacity="0.55"/><rect x="432.9" y="281.4" width="60.9" height="27.9" fill="#84726d"/><rect x="432.9" y="281.4" width="60.9" height="27.9" filter="url(#sp)" opacity=".55"/><rect x="432.9" y="283.4" width="60.9" height="2.2" fill="#241814"/><polygon points="432.9,288.1 482.1,306.6 432.9,309.2" fill="#1a100b"/><rect x="432.9" y="309.2" width="60.9" height="32.0" fill="#160d0a"/><rect x="440.4" y="314.7" width="53.4" height="14.1" fill="#794934"/><rect x="440.4" y="314.7" width="53.4" height="14.1" fill="url(#sh)"/><rect x="440.4" y="314.7" width="1.0" height="14.1" fill="#080403" opacity="0.55"/><rect x="441.7" y="328.0" width="29.9" height="13.3" fill="#794934"/><rect x="441.7" y="328.0" width="29.9" height="13.3" fill="url(#sh)"/><rect x="441.7" y="328.0" width="1.0" height="13.3" fill="#080403" opacity="0.55"/><rect x="471.7" y="328.0" width="22.1" height="13.3" fill="#281812"/><rect x="471.7" y="328.0" width="22.1" height="13.3" fill="url(#sh)"/><rect x="471.7" y="328.0" width="1.0" height="13.3" fill="#080403" opacity="0.55"/><rect x="0.0" y="342.0" width="494.0" height="7.5" fill="#2c201a"/><rect x="0.0" y="342.0" width="494.0" height="1.2" fill="#413128"/><rect x="0.0" y="349.5" width="494.0" height="8.5" fill="#120a07"/><rect x="0.0" y="358.0" width="494.0" height="28.0" fill="#180e0b"/><rect x="0.0" y="360.0" width="494.0" height="25.0" fill="#1d120c"/><rect x="30.0" y="360.0" width="1.5" height="25.0" fill="#0f0805"/><rect x="82.0" y="360.0" width="1.5" height="25.0" fill="#0f0805"/><rect x="134.0" y="360.0" width="1.5" height="25.0" fill="#0f0805"/><rect x="186.0" y="360.0" width="1.5" height="25.0" fill="#0f0805"/><rect x="238.0" y="360.0" width="1.5" height="25.0" fill="#0f0805"/><rect x="290.0" y="360.0" width="1.5" height="25.0" fill="#0f0805"/><rect x="342.0" y="360.0" width="1.5" height="25.0" fill="#0f0805"/><rect x="394.0" y="360.0" width="1.5" height="25.0" fill="#0f0805"/><rect x="446.0" y="360.0" width="1.5" height="25.0" fill="#0f0805"/><rect x="0.0" y="385.0" width="494.0" height="1.5" fill="#0f0805"/><polygon points="0.0,388.1 12.0,388.3 13.3,467.0 0.0,467.0" fill="#4f3428"/><polygon points="0.0,388.1 12.0,388.3 13.3,467.0 0.0,467.0" fill="url(#sh)"/><polygon points="1.6,467.0 13.3,389.6 24.5,390.9 12.0,467.0" fill="#5d4435"/><polygon points="1.6,467.0 13.3,389.6 24.5,390.9 12.0,467.0" fill="url(#sh)"/><line x1="3.1" y1="467.0" x2="14.8" y2="389.6" stroke="#d8b890" stroke-width="1" opacity=".45"/><polygon points="14.6,467.0 25.0,390.2 38.1,390.2 28.9,467.0" fill="#593c2f"/><polygon points="14.6,467.0 25.0,390.2 38.1,390.2 28.9,467.0" fill="url(#sh)"/><rect x="38.1" y="386.8" width="13.0" height="80.2" fill="#4b3b34"/><rect x="38.1" y="386.8" width="13.0" height="80.2" fill="url(#sh)"/><rect x="38.1" y="386.8" width="1.0" height="80.2" fill="#080403" opacity="0.55"/><rect x="56.3" y="388.9" width="13.0" height="78.1" fill="#5d4435"/><rect x="56.3" y="388.9" width="13.0" height="78.1" fill="url(#sh)"/><rect x="57.5" y="388.9" width="1.2" height="78.1" fill="#be9678" opacity="0.5"/><rect x="66.7" y="388.9" width="1.2" height="78.1" fill="#be9678" opacity="0.4"/><rect x="56.3" y="388.9" width="1.0" height="78.1" fill="#080403" opacity="0.55"/><rect x="69.3" y="388.9" width="19.5" height="78.1" fill="#7c4934"/><rect x="69.3" y="388.9" width="19.5" height="78.1" fill="url(#sh)"/><rect x="70.5" y="388.9" width="1.2" height="78.1" fill="#be9678" opacity="0.5"/><rect x="86.2" y="388.9" width="1.2" height="78.1" fill="#be9678" opacity="0.4"/><rect x="69.3" y="388.9" width="1.0" height="78.1" fill="#080403" opacity="0.55"/><polygon points="91.4,384.9 109.7,382.3 129.2,465.7 108.4,467.0" fill="#4a3126"/><polygon points="91.4,384.9 109.7,382.3 129.2,465.7 108.4,467.0" fill="url(#sh)"/><line x1="92.9" y1="384.9" x2="111.2" y2="382.3" stroke="#d8b890" stroke-width="1" opacity=".45"/><polygon points="111.0,382.3 127.9,381.8 144.8,467.0 129.2,465.7" fill="#594335"/><polygon points="111.0,382.3 127.9,381.8 144.8,467.0 129.2,465.7" fill="url(#sh)"/><polygon points="129.2,383.1 146.1,382.3 168.3,467.0 150.0,467.0" fill="#58392d"/><polygon points="129.2,383.1 146.1,382.3 168.3,467.0 150.0,467.0" fill="url(#sh)"/><polygon points="136.5,398.0 143.8,397.4 145.9,405.3 138.6,405.8" fill="#a18673" opacity="0.6"/><polygon points="140.9,405.8 148.2,405.3 150.3,413.1 143.0,413.6" fill="#a18673" opacity="0.6"/><polygon points="150.8,440.9 158.1,440.4 160.2,448.2 152.9,448.8" fill="#a18673" opacity="0.6"/><polygon points="155.2,448.8 162.5,448.2 164.6,456.0 157.3,456.6" fill="#a18673" opacity="0.6"/><rect x="170.9" y="371.1" width="20.8" height="95.8" fill="#4f3c35"/><rect x="170.9" y="371.1" width="20.8" height="95.8" fill="url(#sh)"/><rect x="170.9" y="371.1" width="1.0" height="95.8" fill="#080403" opacity="0.55"/><rect x="191.7" y="371.1" width="16.9" height="95.8" fill="#523c35"/><rect x="191.7" y="371.1" width="16.9" height="95.8" fill="url(#sh)"/><rect x="191.7" y="371.1" width="1.0" height="95.8" fill="#080403" opacity="0.55"/><rect x="211.2" y="373.0" width="23.4" height="94.0" fill="#59372b"/><rect x="211.2" y="392.6" width="23.4" height="1.6" fill="#9a765e" opacity="0.45"/><rect x="211.2" y="394.2" width="23.4" height="1.4" fill="#160b06" opacity="0.225"/><rect x="211.2" y="407.7" width="23.4" height="1.6" fill="#9a765e" opacity="0.45"/><rect x="211.2" y="409.3" width="23.4" height="1.4" fill="#160b06" opacity="0.225"/><rect x="211.2" y="422.8" width="23.4" height="1.6" fill="#9a765e" opacity="0.45"/><rect x="211.2" y="424.4" width="23.4" height="1.4" fill="#160b06" opacity="0.225"/><rect x="211.2" y="437.9" width="23.4" height="1.6" fill="#9a765e" opacity="0.45"/><rect x="211.2" y="439.5" width="23.4" height="1.4" fill="#160b06" opacity="0.225"/><rect x="211.2" y="453.0" width="23.4" height="1.6" fill="#9a765e" opacity="0.45"/><rect x="211.2" y="454.6" width="23.4" height="1.4" fill="#160b06" opacity="0.225"/><rect x="211.2" y="373.0" width="23.4" height="94.0" fill="url(#sh)"/><rect x="211.2" y="373.0" width="1.0" height="94.0" fill="#080403" opacity="0.55"/><rect x="234.7" y="373.0" width="20.1" height="94.0" fill="#5d392d"/><rect x="234.7" y="392.6" width="20.1" height="1.6" fill="#9a765e" opacity="0.45"/><rect x="234.7" y="394.2" width="20.1" height="1.4" fill="#160b06" opacity="0.225"/><rect x="234.7" y="407.7" width="20.1" height="1.6" fill="#9a765e" opacity="0.45"/><rect x="234.7" y="409.3" width="20.1" height="1.4" fill="#160b06" opacity="0.225"/><rect x="234.7" y="422.8" width="20.1" height="1.6" fill="#9a765e" opacity="0.45"/><rect x="234.7" y="424.4" width="20.1" height="1.4" fill="#160b06" opacity="0.225"/><rect x="234.7" y="437.9" width="20.1" height="1.6" fill="#9a765e" opacity="0.45"/><rect x="234.7" y="439.5" width="20.1" height="1.4" fill="#160b06" opacity="0.225"/><rect x="234.7" y="453.0" width="20.1" height="1.6" fill="#9a765e" opacity="0.45"/><rect x="234.7" y="454.6" width="20.1" height="1.4" fill="#160b06" opacity="0.225"/><rect x="234.7" y="373.0" width="20.1" height="94.0" fill="url(#sh)"/><rect x="234.7" y="373.0" width="1.0" height="94.0" fill="#080403" opacity="0.55"/><rect x="254.7" y="373.0" width="20.6" height="94.0" fill="#59372b"/><rect x="254.7" y="392.6" width="20.6" height="1.6" fill="#9a765e" opacity="0.45"/><rect x="254.7" y="394.2" width="20.6" height="1.4" fill="#160b06" opacity="0.225"/><rect x="254.7" y="407.7" width="20.6" height="1.6" fill="#9a765e" opacity="0.45"/><rect x="254.7" y="409.3" width="20.6" height="1.4" fill="#160b06" opacity="0.225"/><rect x="254.7" y="422.8" width="20.6" height="1.6" fill="#9a765e" opacity="0.45"/><rect x="254.7" y="424.4" width="20.6" height="1.4" fill="#160b06" opacity="0.225"/><rect x="254.7" y="437.9" width="20.6" height="1.6" fill="#9a765e" opacity="0.45"/><rect x="254.7" y="439.5" width="20.6" height="1.4" fill="#160b06" opacity="0.225"/><rect x="254.7" y="453.0" width="20.6" height="1.6" fill="#9a765e" opacity="0.45"/><rect x="254.7" y="454.6" width="20.6" height="1.4" fill="#160b06" opacity="0.225"/><rect x="254.7" y="373.0" width="20.6" height="94.0" fill="url(#sh)"/><rect x="254.7" y="373.0" width="1.0" height="94.0" fill="#080403" opacity="0.55"/><rect x="275.3" y="373.0" width="18.8" height="94.0" fill="#5d392d"/><rect x="275.3" y="392.6" width="18.8" height="1.6" fill="#9a765e" opacity="0.45"/><rect x="275.3" y="394.2" width="18.8" height="1.4" fill="#160b06" opacity="0.225"/><rect x="275.3" y="407.7" width="18.8" height="1.6" fill="#9a765e" opacity="0.45"/><rect x="275.3" y="409.3" width="18.8" height="1.4" fill="#160b06" opacity="0.225"/><rect x="275.3" y="422.8" width="18.8" height="1.6" fill="#9a765e" opacity="0.45"/><rect x="275.3" y="424.4" width="18.8" height="1.4" fill="#160b06" opacity="0.225"/><rect x="275.3" y="437.9" width="18.8" height="1.6" fill="#9a765e" opacity="0.45"/><rect x="275.3" y="439.5" width="18.8" height="1.4" fill="#160b06" opacity="0.225"/><rect x="275.3" y="453.0" width="18.8" height="1.6" fill="#9a765e" opacity="0.45"/><rect x="275.3" y="454.6" width="18.8" height="1.4" fill="#160b06" opacity="0.225"/><rect x="275.3" y="373.0" width="18.8" height="94.0" fill="url(#sh)"/><rect x="275.3" y="373.0" width="1.0" height="94.0" fill="#080403" opacity="0.55"/><rect x="294.1" y="373.0" width="20.6" height="94.0" fill="#58362a"/><rect x="294.1" y="392.6" width="20.6" height="1.6" fill="#9a765e" opacity="0.45"/><rect x="294.1" y="394.2" width="20.6" height="1.4" fill="#160b06" opacity="0.225"/><rect x="294.1" y="407.7" width="20.6" height="1.6" fill="#9a765e" opacity="0.45"/><rect x="294.1" y="409.3" width="20.6" height="1.4" fill="#160b06" opacity="0.225"/><rect x="294.1" y="422.8" width="20.6" height="1.6" fill="#9a765e" opacity="0.45"/><rect x="294.1" y="424.4" width="20.6" height="1.4" fill="#160b06" opacity="0.225"/><rect x="294.1" y="437.9" width="20.6" height="1.6" fill="#9a765e" opacity="0.45"/><rect x="294.1" y="439.5" width="20.6" height="1.4" fill="#160b06" opacity="0.225"/><rect x="294.1" y="453.0" width="20.6" height="1.6" fill="#9a765e" opacity="0.45"/><rect x="294.1" y="454.6" width="20.6" height="1.4" fill="#160b06" opacity="0.225"/><rect x="294.1" y="373.0" width="20.6" height="94.0" fill="url(#sh)"/><rect x="294.1" y="373.0" width="1.0" height="94.0" fill="#080403" opacity="0.55"/><rect x="314.6" y="373.0" width="20.6" height="94.0" fill="#5d392d"/><rect x="314.6" y="392.6" width="20.6" height="1.6" fill="#9a765e" opacity="0.45"/><rect x="314.6" y="394.2" width="20.6" height="1.4" fill="#160b06" opacity="0.225"/><rect x="314.6" y="407.7" width="20.6" height="1.6" fill="#9a765e" opacity="0.45"/><rect x="314.6" y="409.3" width="20.6" height="1.4" fill="#160b06" opacity="0.225"/><rect x="314.6" y="422.8" width="20.6" height="1.6" fill="#9a765e" opacity="0.45"/><rect x="314.6" y="424.4" width="20.6" height="1.4" fill="#160b06" opacity="0.225"/><rect x="314.6" y="437.9" width="20.6" height="1.6" fill="#9a765e" opacity="0.45"/><rect x="314.6" y="439.5" width="20.6" height="1.4" fill="#160b06" opacity="0.225"/><rect x="314.6" y="453.0" width="20.6" height="1.6" fill="#9a765e" opacity="0.45"/><rect x="314.6" y="454.6" width="20.6" height="1.4" fill="#160b06" opacity="0.225"/><rect x="314.6" y="373.0" width="20.6" height="94.0" fill="url(#sh)"/><rect x="314.6" y="373.0" width="1.0" height="94.0" fill="#080403" opacity="0.55"/><rect x="335.2" y="373.0" width="20.6" height="94.0" fill="#59372b"/><rect x="335.2" y="392.6" width="20.6" height="1.6" fill="#9a765e" opacity="0.45"/><rect x="335.2" y="394.2" width="20.6" height="1.4" fill="#160b06" opacity="0.225"/><rect x="335.2" y="407.7" width="20.6" height="1.6" fill="#9a765e" opacity="0.45"/><rect x="335.2" y="409.3" width="20.6" height="1.4" fill="#160b06" opacity="0.225"/><rect x="335.2" y="422.8" width="20.6" height="1.6" fill="#9a765e" opacity="0.45"/><rect x="335.2" y="424.4" width="20.6" height="1.4" fill="#160b06" opacity="0.225"/><rect x="335.2" y="437.9" width="20.6" height="1.6" fill="#9a765e" opacity="0.45"/><rect x="335.2" y="439.5" width="20.6" height="1.4" fill="#160b06" opacity="0.225"/><rect x="335.2" y="453.0" width="20.6" height="1.6" fill="#9a765e" opacity="0.45"/><rect x="335.2" y="454.6" width="20.6" height="1.4" fill="#160b06" opacity="0.225"/><rect x="335.2" y="373.0" width="20.6" height="94.0" fill="url(#sh)"/><rect x="335.2" y="373.0" width="1.0" height="94.0" fill="#080403" opacity="0.55"/><rect x="355.8" y="373.5" width="12.2" height="93.5" fill="#44342f"/><rect x="355.8" y="373.5" width="12.2" height="93.5" fill="url(#sh)"/><rect x="355.8" y="373.5" width="1.0" height="93.5" fill="#080403" opacity="0.55"/><polygon points="368.5,376.4 386.0,372.4 405.8,465.9 383.1,467.2" fill="#59372b"/><polygon points="368.5,376.4 386.0,372.4 405.8,465.9 383.1,467.2" fill="url(#sh)"/><polygon points="388.6,376.4 405.5,373.0 428.7,465.9 407.9,467.2" fill="#5d392d"/><polygon points="388.6,376.4 405.5,373.0 428.7,465.9 407.9,467.2" fill="url(#sh)"/><polygon points="409.9,379.0 427.9,373.8 463.1,464.4 441.7,467.2" fill="#59372b"/><polygon points="409.9,379.0 427.9,373.8 463.1,464.4 441.7,467.2" fill="url(#sh)"/><polygon points="435.2,381.6 449.8,378.4 493.8,465.9 483.1,469.8" fill="#4b3b34"/><polygon points="435.2,381.6 449.8,378.4 493.8,465.9 483.1,469.8" fill="url(#sh)"/><rect x="0.0" y="467.0" width="494.0" height="7.5" fill="#2c201a"/><rect x="0.0" y="467.0" width="494.0" height="1.2" fill="#413128"/><rect x="0.0" y="474.5" width="494.0" height="19.5" fill="#120a07"/><rect x="0.0" y="494.0" width="494.0" height="15.0" fill="#180e0b"/><rect x="0.0" y="495.0" width="494.0" height="13.0" fill="#1d120c"/><rect x="10.0" y="495.0" width="1.5" height="13.0" fill="#0f0805"/><rect x="62.0" y="495.0" width="1.5" height="13.0" fill="#0f0805"/><rect x="114.0" y="495.0" width="1.5" height="13.0" fill="#0f0805"/><rect x="166.0" y="495.0" width="1.5" height="13.0" fill="#0f0805"/><rect x="218.0" y="495.0" width="1.5" height="13.0" fill="#0f0805"/><rect x="270.0" y="495.0" width="1.5" height="13.0" fill="#0f0805"/><rect x="322.0" y="495.0" width="1.5" height="13.0" fill="#0f0805"/><rect x="374.0" y="495.0" width="1.5" height="13.0" fill="#0f0805"/><rect x="426.0" y="495.0" width="1.5" height="13.0" fill="#0f0805"/><rect x="478.0" y="495.0" width="1.5" height="13.0" fill="#0f0805"/><rect x="0.0" y="508.0" width="494.0" height="1.5" fill="#0f0805"/><rect x="0.0" y="509.0" width="494.0" height="81.0" fill="#0f0805"/><polygon points="0.0,509.9 15.9,509.4 25.0,590.7 0.0,590.7" fill="#44322b"/><polygon points="0.0,509.9 15.9,509.4 25.0,590.7 0.0,590.7" fill="url(#sh)"/><polygon points="17.2,511.2 28.4,511.2 39.4,590.7 25.0,590.7" fill="#593c2f"/><polygon points="17.2,511.2 28.4,511.2 39.4,590.7 25.0,590.7" fill="url(#sh)"/><line x1="18.7" y1="511.2" x2="29.9" y2="511.2" stroke="#d8b890" stroke-width="1" opacity=".45"/><polygon points="29.7,512.0 42.0,511.2 56.3,590.7 39.4,590.7" fill="#5d4435"/><polygon points="29.7,512.0 42.0,511.2 56.3,590.7 39.4,590.7" fill="url(#sh)"/><line x1="31.2" y1="512.0" x2="43.5" y2="511.2" stroke="#d8b890" stroke-width="1" opacity=".45"/><polygon points="42.0,511.2 56.3,509.4 77.1,589.4 56.3,590.7" fill="#4f3428"/><polygon points="42.0,511.2 56.3,509.4 77.1,589.4 56.3,590.7" fill="url(#sh)"/><line x1="43.5" y1="511.2" x2="57.8" y2="509.4" stroke="#d8b890" stroke-width="1" opacity=".45"/><polygon points="57.6,510.7 70.1,509.4 98.0,588.1 78.4,590.2" fill="#4b3b34"/><polygon points="57.6,510.7 70.1,509.4 98.0,588.1 78.4,590.2" fill="url(#sh)"/><polygon points="99.3,590.7 98.0,558.1 114.9,495.1 116.2,590.7" fill="#33221a"/><polygon points="99.3,590.7 98.0,558.1 114.9,495.1 116.2,590.7" fill="url(#sh)"/><rect x="113.6" y="495.1" width="23.4" height="94.3" fill="#7c442f"/><rect x="113.6" y="495.1" width="23.4" height="94.3" fill="url(#sh)"/><rect x="114.8" y="495.1" width="1.2" height="94.3" fill="#be9678" opacity="0.5"/><rect x="134.4" y="495.1" width="1.2" height="94.3" fill="#be9678" opacity="0.4"/><rect x="113.6" y="495.1" width="1.0" height="94.3" fill="#080403" opacity="0.55"/><rect x="138.3" y="494.3" width="22.1" height="95.1" fill="#44362f"/><rect x="138.3" y="494.3" width="22.1" height="95.1" fill="url(#sh)"/><rect x="138.3" y="494.3" width="1.0" height="95.1" fill="#080403" opacity="0.55"/><rect x="163.1" y="495.1" width="20.8" height="94.3" fill="#7c442f"/><rect x="163.1" y="495.1" width="20.8" height="94.3" fill="url(#sh)"/><rect x="164.3" y="495.1" width="1.2" height="94.3" fill="#be9678" opacity="0.5"/><rect x="181.3" y="495.1" width="1.2" height="94.3" fill="#be9678" opacity="0.4"/><rect x="163.1" y="495.1" width="1.0" height="94.3" fill="#080403" opacity="0.55"/><rect x="183.9" y="494.3" width="18.2" height="95.1" fill="#4b3b34"/><rect x="183.9" y="494.3" width="18.2" height="95.1" fill="url(#sh)"/><rect x="183.9" y="494.3" width="1.0" height="95.1" fill="#080403" opacity="0.55"/><rect x="202.1" y="495.6" width="24.7" height="93.8" fill="#5b4435"/><rect x="202.1" y="495.6" width="24.7" height="93.8" fill="url(#sh)"/><rect x="202.1" y="495.6" width="1.0" height="93.8" fill="#080403" opacity="0.55"/><rect x="226.9" y="495.6" width="24.7" height="93.8" fill="#5b4435"/><rect x="226.9" y="495.6" width="24.7" height="93.8" fill="url(#sh)"/><rect x="226.9" y="495.6" width="1.0" height="93.8" fill="#080403" opacity="0.55"/><rect x="251.6" y="496.9" width="13.3" height="92.4" fill="#5d4435"/><rect x="251.6" y="496.9" width="13.3" height="92.4" fill="url(#sh)"/><rect x="251.6" y="496.9" width="1.0" height="92.4" fill="#080403" opacity="0.55"/><rect x="264.9" y="495.1" width="14.8" height="94.3" fill="#4b3b34"/><rect x="264.9" y="495.1" width="14.8" height="94.3" fill="url(#sh)"/><rect x="264.9" y="495.1" width="1.0" height="94.3" fill="#080403" opacity="0.55"/><rect x="283.6" y="496.9" width="23.7" height="92.4" fill="#7c442f"/><rect x="283.6" y="496.9" width="23.7" height="92.4" fill="url(#sh)"/><rect x="284.8" y="496.9" width="1.2" height="92.4" fill="#be9678" opacity="0.5"/><rect x="304.7" y="496.9" width="1.2" height="92.4" fill="#be9678" opacity="0.4"/><rect x="283.6" y="496.9" width="1.0" height="92.4" fill="#080403" opacity="0.55"/><rect x="304.7" y="495.6" width="16.1" height="93.8" fill="#5d4435"/><rect x="304.7" y="495.6" width="16.1" height="93.8" fill="url(#sh)"/><rect x="304.7" y="495.6" width="1.0" height="93.8" fill="#080403" opacity="0.55"/><rect x="320.9" y="499.5" width="21.4" height="89.8" fill="#41312b"/><rect x="320.9" y="499.5" width="21.4" height="89.8" fill="url(#sh)"/><rect x="320.9" y="499.5" width="1.0" height="89.8" fill="#080403" opacity="0.55"/><polygon points="339.6,503.4 352.9,502.9 370.4,589.4 350.3,590.7" fill="#5d4435"/><polygon points="339.6,503.4 352.9,502.9 370.4,589.4 350.3,590.7" fill="url(#sh)"/><line x1="341.1" y1="503.4" x2="354.4" y2="502.9" stroke="#d8b890" stroke-width="1" opacity=".45"/><polygon points="352.9,503.4 370.4,502.1 387.5,589.4 370.4,589.4" fill="#604839"/><polygon points="352.9,503.4 370.4,502.1 387.5,589.4 370.4,589.4" fill="url(#sh)"/><line x1="354.4" y1="503.4" x2="371.9" y2="502.1" stroke="#d8b890" stroke-width="1" opacity=".45"/><polygon points="370.4,502.1 384.9,496.9 410.2,586.8 387.5,589.4" fill="#4f3428"/><polygon points="370.4,502.1 384.9,496.9 410.2,586.8 387.5,589.4" fill="url(#sh)"/><polygon points="384.9,498.2 396.9,507.3 428.9,586.8 410.2,586.8" fill="#604635"/><polygon points="384.9,498.2 396.9,507.3 428.9,586.8 410.2,586.8" fill="url(#sh)"/><line x1="386.4" y1="498.2" x2="398.4" y2="507.3" stroke="#d8b890" stroke-width="1" opacity=".45"/><rect x="426.9" y="516.5" width="14.8" height="72.9" fill="#4f3428"/><rect x="426.9" y="516.5" width="14.8" height="72.9" fill="url(#sh)"/><rect x="426.9" y="516.5" width="1.0" height="72.9" fill="#080403" opacity="0.55"/><rect x="441.7" y="515.2" width="21.4" height="74.2" fill="#7c442f"/><rect x="441.7" y="515.2" width="21.4" height="74.2" fill="url(#sh)"/><rect x="442.9" y="515.2" width="1.2" height="74.2" fill="#be9678" opacity="0.5"/><rect x="460.5" y="515.2" width="1.2" height="74.2" fill="#be9678" opacity="0.4"/><rect x="441.7" y="515.2" width="1.0" height="74.2" fill="#080403" opacity="0.55"/><polygon points="453.7,501.6 475.0,498.2 493.8,590.7 470.9,590.7" fill="#59392b"/><polygon points="453.7,501.6 475.0,498.2 493.8,590.7 470.9,590.7" fill="url(#sh)"/><line x1="455.2" y1="501.6" x2="476.5" y2="498.2" stroke="#d8b890" stroke-width="1" opacity=".45"/><rect x="483.1" y="502.1" width="10.7" height="87.2" fill="#4f3428"/><rect x="483.1" y="502.1" width="10.7" height="87.2" fill="url(#sh)"/><rect x="483.1" y="502.1" width="1.0" height="87.2" fill="#080403" opacity="0.55"/><rect x="0.0" y="590.0" width="494.0" height="9.5" fill="#2c201a"/><rect x="0.0" y="590.0" width="494.0" height="1.2" fill="#413128"/><rect x="0.0" y="599.5" width="494.0" height="27.5" fill="#120a07"/><rect x="0.0" y="627.0" width="494.0" height="133.0" fill="#0f0805"/><rect x="0.6" y="626.0" width="13.5" height="131.5" fill="#523228"/><rect x="0.6" y="645.6" width="13.5" height="1.6" fill="#9a765e" opacity="0.45"/><rect x="0.6" y="647.2" width="13.5" height="1.4" fill="#160b06" opacity="0.225"/><rect x="0.6" y="660.7" width="13.5" height="1.6" fill="#9a765e" opacity="0.45"/><rect x="0.6" y="662.3" width="13.5" height="1.4" fill="#160b06" opacity="0.225"/><rect x="0.6" y="675.8" width="13.5" height="1.6" fill="#9a765e" opacity="0.45"/><rect x="0.6" y="677.4" width="13.5" height="1.4" fill="#160b06" opacity="0.225"/><rect x="0.6" y="690.9" width="13.5" height="1.6" fill="#9a765e" opacity="0.45"/><rect x="0.6" y="692.5" width="13.5" height="1.4" fill="#160b06" opacity="0.225"/><rect x="0.6" y="706.0" width="13.5" height="1.6" fill="#9a765e" opacity="0.45"/><rect x="0.6" y="707.6" width="13.5" height="1.4" fill="#160b06" opacity="0.225"/><rect x="0.6" y="721.1" width="13.5" height="1.6" fill="#9a765e" opacity="0.45"/><rect x="0.6" y="722.7" width="13.5" height="1.4" fill="#160b06" opacity="0.225"/><rect x="0.6" y="736.2" width="13.5" height="1.6" fill="#9a765e" opacity="0.45"/><rect x="0.6" y="737.8" width="13.5" height="1.4" fill="#160b06" opacity="0.225"/><rect x="0.6" y="751.3" width="13.5" height="1.6" fill="#9a765e" opacity="0.45"/><rect x="0.6" y="752.9" width="13.5" height="1.4" fill="#160b06" opacity="0.225"/><rect x="0.6" y="626.0" width="13.5" height="131.5" fill="url(#sh)"/><rect x="0.6" y="626.0" width="1.0" height="131.5" fill="#080403" opacity="0.55"/><rect x="15.1" y="626.0" width="26.3" height="131.5" fill="#543329"/><rect x="15.1" y="645.6" width="26.3" height="1.6" fill="#9a765e" opacity="0.45"/><rect x="15.1" y="647.2" width="26.3" height="1.4" fill="#160b06" opacity="0.225"/><rect x="15.1" y="660.7" width="26.3" height="1.6" fill="#9a765e" opacity="0.45"/><rect x="15.1" y="662.3" width="26.3" height="1.4" fill="#160b06" opacity="0.225"/><rect x="15.1" y="675.8" width="26.3" height="1.6" fill="#9a765e" opacity="0.45"/><rect x="15.1" y="677.4" width="26.3" height="1.4" fill="#160b06" opacity="0.225"/><rect x="15.1" y="690.9" width="26.3" height="1.6" fill="#9a765e" opacity="0.45"/><rect x="15.1" y="692.5" width="26.3" height="1.4" fill="#160b06" opacity="0.225"/><rect x="15.1" y="706.0" width="26.3" height="1.6" fill="#9a765e" opacity="0.45"/><rect x="15.1" y="707.6" width="26.3" height="1.4" fill="#160b06" opacity="0.225"/><rect x="15.1" y="721.1" width="26.3" height="1.6" fill="#9a765e" opacity="0.45"/><rect x="15.1" y="722.7" width="26.3" height="1.4" fill="#160b06" opacity="0.225"/><rect x="15.1" y="736.2" width="26.3" height="1.6" fill="#9a765e" opacity="0.45"/><rect x="15.1" y="737.8" width="26.3" height="1.4" fill="#160b06" opacity="0.225"/><rect x="15.1" y="751.3" width="26.3" height="1.6" fill="#9a765e" opacity="0.45"/><rect x="15.1" y="752.9" width="26.3" height="1.4" fill="#160b06" opacity="0.225"/><rect x="15.1" y="626.0" width="26.3" height="131.5" fill="url(#sh)"/><rect x="15.1" y="626.0" width="1.0" height="131.5" fill="#080403" opacity="0.55"/><rect x="42.5" y="626.0" width="25.0" height="131.5" fill="#442f26"/><rect x="42.5" y="626.0" width="25.0" height="131.5" fill="url(#sh)"/><rect x="42.5" y="626.0" width="1.0" height="131.5" fill="#080403" opacity="0.55"/><rect x="68.5" y="626.0" width="26.3" height="131.5" fill="#523228"/><rect x="68.5" y="645.6" width="26.3" height="1.6" fill="#9a765e" opacity="0.45"/><rect x="68.5" y="647.2" width="26.3" height="1.4" fill="#160b06" opacity="0.225"/><rect x="68.5" y="660.7" width="26.3" height="1.6" fill="#9a765e" opacity="0.45"/><rect x="68.5" y="662.3" width="26.3" height="1.4" fill="#160b06" opacity="0.225"/><rect x="68.5" y="675.8" width="26.3" height="1.6" fill="#9a765e" opacity="0.45"/><rect x="68.5" y="677.4" width="26.3" height="1.4" fill="#160b06" opacity="0.225"/><rect x="68.5" y="690.9" width="26.3" height="1.6" fill="#9a765e" opacity="0.45"/><rect x="68.5" y="692.5" width="26.3" height="1.4" fill="#160b06" opacity="0.225"/><rect x="68.5" y="706.0" width="26.3" height="1.6" fill="#9a765e" opacity="0.45"/><rect x="68.5" y="707.6" width="26.3" height="1.4" fill="#160b06" opacity="0.225"/><rect x="68.5" y="721.1" width="26.3" height="1.6" fill="#9a765e" opacity="0.45"/><rect x="68.5" y="722.7" width="26.3" height="1.4" fill="#160b06" opacity="0.225"/><rect x="68.5" y="736.2" width="26.3" height="1.6" fill="#9a765e" opacity="0.45"/><rect x="68.5" y="737.8" width="26.3" height="1.4" fill="#160b06" opacity="0.225"/><rect x="68.5" y="751.3" width="26.3" height="1.6" fill="#9a765e" opacity="0.45"/><rect x="68.5" y="752.9" width="26.3" height="1.4" fill="#160b06" opacity="0.225"/><rect x="68.5" y="626.0" width="26.3" height="131.5" fill="url(#sh)"/><rect x="68.5" y="626.0" width="1.0" height="131.5" fill="#080403" opacity="0.55"/><rect x="95.9" y="626.0" width="27.6" height="131.5" fill="#543329"/><rect x="95.9" y="645.6" width="27.6" height="1.6" fill="#9a765e" opacity="0.45"/><rect x="95.9" y="647.2" width="27.6" height="1.4" fill="#160b06" opacity="0.225"/><rect x="95.9" y="660.7" width="27.6" height="1.6" fill="#9a765e" opacity="0.45"/><rect x="95.9" y="662.3" width="27.6" height="1.4" fill="#160b06" opacity="0.225"/><rect x="95.9" y="675.8" width="27.6" height="1.6" fill="#9a765e" opacity="0.45"/><rect x="95.9" y="677.4" width="27.6" height="1.4" fill="#160b06" opacity="0.225"/><rect x="95.9" y="690.9" width="27.6" height="1.6" fill="#9a765e" opacity="0.45"/><rect x="95.9" y="692.5" width="27.6" height="1.4" fill="#160b06" opacity="0.225"/><rect x="95.9" y="706.0" width="27.6" height="1.6" fill="#9a765e" opacity="0.45"/><rect x="95.9" y="707.6" width="27.6" height="1.4" fill="#160b06" opacity="0.225"/><rect x="95.9" y="721.1" width="27.6" height="1.6" fill="#9a765e" opacity="0.45"/><rect x="95.9" y="722.7" width="27.6" height="1.4" fill="#160b06" opacity="0.225"/><rect x="95.9" y="736.2" width="27.6" height="1.6" fill="#9a765e" opacity="0.45"/><rect x="95.9" y="737.8" width="27.6" height="1.4" fill="#160b06" opacity="0.225"/><rect x="95.9" y="751.3" width="27.6" height="1.6" fill="#9a765e" opacity="0.45"/><rect x="95.9" y="752.9" width="27.6" height="1.4" fill="#160b06" opacity="0.225"/><rect x="95.9" y="626.0" width="27.6" height="131.5" fill="url(#sh)"/><rect x="95.9" y="626.0" width="1.0" height="131.5" fill="#080403" opacity="0.55"/><rect x="124.5" y="626.0" width="27.6" height="131.5" fill="#523228"/><rect x="124.5" y="645.6" width="27.6" height="1.6" fill="#9a765e" opacity="0.45"/><rect x="124.5" y="647.2" width="27.6" height="1.4" fill="#160b06" opacity="0.225"/><rect x="124.5" y="660.7" width="27.6" height="1.6" fill="#9a765e" opacity="0.45"/><rect x="124.5" y="662.3" width="27.6" height="1.4" fill="#160b06" opacity="0.225"/><rect x="124.5" y="675.8" width="27.6" height="1.6" fill="#9a765e" opacity="0.45"/><rect x="124.5" y="677.4" width="27.6" height="1.4" fill="#160b06" opacity="0.225"/><rect x="124.5" y="690.9" width="27.6" height="1.6" fill="#9a765e" opacity="0.45"/><rect x="124.5" y="692.5" width="27.6" height="1.4" fill="#160b06" opacity="0.225"/><rect x="124.5" y="706.0" width="27.6" height="1.6" fill="#9a765e" opacity="0.45"/><rect x="124.5" y="707.6" width="27.6" height="1.4" fill="#160b06" opacity="0.225"/><rect x="124.5" y="721.1" width="27.6" height="1.6" fill="#9a765e" opacity="0.45"/><rect x="124.5" y="722.7" width="27.6" height="1.4" fill="#160b06" opacity="0.225"/><rect x="124.5" y="736.2" width="27.6" height="1.6" fill="#9a765e" opacity="0.45"/><rect x="124.5" y="737.8" width="27.6" height="1.4" fill="#160b06" opacity="0.225"/><rect x="124.5" y="751.3" width="27.6" height="1.6" fill="#9a765e" opacity="0.45"/><rect x="124.5" y="752.9" width="27.6" height="1.4" fill="#160b06" opacity="0.225"/><rect x="124.5" y="626.0" width="27.6" height="131.5" fill="url(#sh)"/><rect x="124.5" y="626.0" width="1.0" height="131.5" fill="#080403" opacity="0.55"/><rect x="153.2" y="626.0" width="18.5" height="131.5" fill="#41322d"/><rect x="153.2" y="626.0" width="18.5" height="131.5" fill="url(#sh)"/><rect x="153.2" y="626.0" width="1.0" height="131.5" fill="#080403" opacity="0.55"/><rect x="172.7" y="626.0" width="27.6" height="131.5" fill="#523228"/><rect x="172.7" y="645.6" width="27.6" height="1.6" fill="#9a765e" opacity="0.45"/><rect x="172.7" y="647.2" width="27.6" height="1.4" fill="#160b06" opacity="0.225"/><rect x="172.7" y="660.7" width="27.6" height="1.6" fill="#9a765e" opacity="0.45"/><rect x="172.7" y="662.3" width="27.6" height="1.4" fill="#160b06" opacity="0.225"/><rect x="172.7" y="675.8" width="27.6" height="1.6" fill="#9a765e" opacity="0.45"/><rect x="172.7" y="677.4" width="27.6" height="1.4" fill="#160b06" opacity="0.225"/><rect x="172.7" y="690.9" width="27.6" height="1.6" fill="#9a765e" opacity="0.45"/><rect x="172.7" y="692.5" width="27.6" height="1.4" fill="#160b06" opacity="0.225"/><rect x="172.7" y="706.0" width="27.6" height="1.6" fill="#9a765e" opacity="0.45"/><rect x="172.7" y="707.6" width="27.6" height="1.4" fill="#160b06" opacity="0.225"/><rect x="172.7" y="721.1" width="27.6" height="1.6" fill="#9a765e" opacity="0.45"/><rect x="172.7" y="722.7" width="27.6" height="1.4" fill="#160b06" opacity="0.225"/><rect x="172.7" y="736.2" width="27.6" height="1.6" fill="#9a765e" opacity="0.45"/><rect x="172.7" y="737.8" width="27.6" height="1.4" fill="#160b06" opacity="0.225"/><rect x="172.7" y="751.3" width="27.6" height="1.6" fill="#9a765e" opacity="0.45"/><rect x="172.7" y="752.9" width="27.6" height="1.4" fill="#160b06" opacity="0.225"/><rect x="172.7" y="626.0" width="27.6" height="131.5" fill="url(#sh)"/><rect x="172.7" y="626.0" width="1.0" height="131.5" fill="#080403" opacity="0.55"/><rect x="201.3" y="626.0" width="27.6" height="131.5" fill="#543329"/><rect x="201.3" y="645.6" width="27.6" height="1.6" fill="#9a765e" opacity="0.45"/><rect x="201.3" y="647.2" width="27.6" height="1.4" fill="#160b06" opacity="0.225"/><rect x="201.3" y="660.7" width="27.6" height="1.6" fill="#9a765e" opacity="0.45"/><rect x="201.3" y="662.3" width="27.6" height="1.4" fill="#160b06" opacity="0.225"/><rect x="201.3" y="675.8" width="27.6" height="1.6" fill="#9a765e" opacity="0.45"/><rect x="201.3" y="677.4" width="27.6" height="1.4" fill="#160b06" opacity="0.225"/><rect x="201.3" y="690.9" width="27.6" height="1.6" fill="#9a765e" opacity="0.45"/><rect x="201.3" y="692.5" width="27.6" height="1.4" fill="#160b06" opacity="0.225"/><rect x="201.3" y="706.0" width="27.6" height="1.6" fill="#9a765e" opacity="0.45"/><rect x="201.3" y="707.6" width="27.6" height="1.4" fill="#160b06" opacity="0.225"/><rect x="201.3" y="721.1" width="27.6" height="1.6" fill="#9a765e" opacity="0.45"/><rect x="201.3" y="722.7" width="27.6" height="1.4" fill="#160b06" opacity="0.225"/><rect x="201.3" y="736.2" width="27.6" height="1.6" fill="#9a765e" opacity="0.45"/><rect x="201.3" y="737.8" width="27.6" height="1.4" fill="#160b06" opacity="0.225"/><rect x="201.3" y="751.3" width="27.6" height="1.6" fill="#9a765e" opacity="0.45"/><rect x="201.3" y="752.9" width="27.6" height="1.4" fill="#160b06" opacity="0.225"/><rect x="201.3" y="626.0" width="27.6" height="131.5" fill="url(#sh)"/><rect x="201.3" y="626.0" width="1.0" height="131.5" fill="#080403" opacity="0.55"/><rect x="230.0" y="626.0" width="28.9" height="131.5" fill="#523228"/><rect x="230.0" y="645.6" width="28.9" height="1.6" fill="#9a765e" opacity="0.45"/><rect x="230.0" y="647.2" width="28.9" height="1.4" fill="#160b06" opacity="0.225"/><rect x="230.0" y="660.7" width="28.9" height="1.6" fill="#9a765e" opacity="0.45"/><rect x="230.0" y="662.3" width="28.9" height="1.4" fill="#160b06" opacity="0.225"/><rect x="230.0" y="675.8" width="28.9" height="1.6" fill="#9a765e" opacity="0.45"/><rect x="230.0" y="677.4" width="28.9" height="1.4" fill="#160b06" opacity="0.225"/><rect x="230.0" y="690.9" width="28.9" height="1.6" fill="#9a765e" opacity="0.45"/><rect x="230.0" y="692.5" width="28.9" height="1.4" fill="#160b06" opacity="0.225"/><rect x="230.0" y="706.0" width="28.9" height="1.6" fill="#9a765e" opacity="0.45"/><rect x="230.0" y="707.6" width="28.9" height="1.4" fill="#160b06" opacity="0.225"/><rect x="230.0" y="721.1" width="28.9" height="1.6" fill="#9a765e" opacity="0.45"/><rect x="230.0" y="722.7" width="28.9" height="1.4" fill="#160b06" opacity="0.225"/><rect x="230.0" y="736.2" width="28.9" height="1.6" fill="#9a765e" opacity="0.45"/><rect x="230.0" y="737.8" width="28.9" height="1.4" fill="#160b06" opacity="0.225"/><rect x="230.0" y="751.3" width="28.9" height="1.6" fill="#9a765e" opacity="0.45"/><rect x="230.0" y="752.9" width="28.9" height="1.4" fill="#160b06" opacity="0.225"/><rect x="230.0" y="626.0" width="28.9" height="131.5" fill="url(#sh)"/><rect x="230.0" y="626.0" width="1.0" height="131.5" fill="#080403" opacity="0.55"/><rect x="259.9" y="626.0" width="27.6" height="131.5" fill="#79442f"/><rect x="259.9" y="626.0" width="27.6" height="131.5" fill="url(#sh)"/><rect x="261.1" y="626.0" width="1.2" height="131.5" fill="#be9678" opacity="0.5"/><rect x="284.9" y="626.0" width="1.2" height="131.5" fill="#be9678" opacity="0.4"/><rect x="259.9" y="626.0" width="1.0" height="131.5" fill="#080403" opacity="0.55"/><rect x="288.6" y="626.0" width="21.9" height="131.5" fill="#523228"/><rect x="288.6" y="645.6" width="21.9" height="1.6" fill="#9a765e" opacity="0.45"/><rect x="288.6" y="647.2" width="21.9" height="1.4" fill="#160b06" opacity="0.225"/><rect x="288.6" y="660.7" width="21.9" height="1.6" fill="#9a765e" opacity="0.45"/><rect x="288.6" y="662.3" width="21.9" height="1.4" fill="#160b06" opacity="0.225"/><rect x="288.6" y="675.8" width="21.9" height="1.6" fill="#9a765e" opacity="0.45"/><rect x="288.6" y="677.4" width="21.9" height="1.4" fill="#160b06" opacity="0.225"/><rect x="288.6" y="690.9" width="21.9" height="1.6" fill="#9a765e" opacity="0.45"/><rect x="288.6" y="692.5" width="21.9" height="1.4" fill="#160b06" opacity="0.225"/><rect x="288.6" y="706.0" width="21.9" height="1.6" fill="#9a765e" opacity="0.45"/><rect x="288.6" y="707.6" width="21.9" height="1.4" fill="#160b06" opacity="0.225"/><rect x="288.6" y="721.1" width="21.9" height="1.6" fill="#9a765e" opacity="0.45"/><rect x="288.6" y="722.7" width="21.9" height="1.4" fill="#160b06" opacity="0.225"/><rect x="288.6" y="736.2" width="21.9" height="1.6" fill="#9a765e" opacity="0.45"/><rect x="288.6" y="737.8" width="21.9" height="1.4" fill="#160b06" opacity="0.225"/><rect x="288.6" y="751.3" width="21.9" height="1.6" fill="#9a765e" opacity="0.45"/><rect x="288.6" y="752.9" width="21.9" height="1.4" fill="#160b06" opacity="0.225"/><rect x="288.6" y="626.0" width="21.9" height="131.5" fill="url(#sh)"/><rect x="288.6" y="626.0" width="1.0" height="131.5" fill="#080403" opacity="0.55"/><rect x="311.0" y="626.0" width="61.5" height="131.5" fill="#0c0605"/><rect x="324.3" y="626.0" width="10.7" height="104.2" fill="#33201a"/><rect x="324.3" y="626.0" width="10.7" height="104.2" fill="url(#sh)"/><rect x="324.3" y="626.0" width="1.0" height="104.2" fill="#080403" opacity="0.55"/><rect x="342.5" y="626.0" width="29.9" height="127.6" fill="#79442f"/><rect x="342.5" y="626.0" width="29.9" height="127.6" fill="url(#sh)"/><rect x="343.7" y="626.0" width="1.2" height="127.6" fill="#be9678" opacity="0.5"/><rect x="369.8" y="626.0" width="1.2" height="127.6" fill="#be9678" opacity="0.4"/><rect x="342.5" y="626.0" width="1.0" height="127.6" fill="#080403" opacity="0.55"/><polygon points="334.9,678.1 358.4,756.2 334.9,757.6" fill="#080403" opacity="0.6"/><rect x="312.3" y="658.9" width="9.6" height="100.0" fill="#41291f"/><rect x="312.3" y="658.9" width="9.6" height="100.0" fill="url(#sh)"/><rect x="312.3" y="658.9" width="1.0" height="100.0" fill="#080403" opacity="0.55"/><rect x="321.9" y="664.6" width="32.0" height="94.3" fill="#79442f"/><rect x="321.9" y="664.6" width="32.0" height="94.3" fill="url(#sh)"/><rect x="323.1" y="664.6" width="1.2" height="94.3" fill="#be9678" opacity="0.5"/><rect x="351.3" y="664.6" width="1.2" height="94.3" fill="#be9678" opacity="0.4"/><rect x="321.9" y="664.6" width="1.0" height="94.3" fill="#080403" opacity="0.55"/><rect x="373.0" y="626.0" width="26.3" height="131.5" fill="#523228"/><rect x="373.0" y="645.6" width="26.3" height="1.6" fill="#9a765e" opacity="0.45"/><rect x="373.0" y="647.2" width="26.3" height="1.4" fill="#160b06" opacity="0.225"/><rect x="373.0" y="660.7" width="26.3" height="1.6" fill="#9a765e" opacity="0.45"/><rect x="373.0" y="662.3" width="26.3" height="1.4" fill="#160b06" opacity="0.225"/><rect x="373.0" y="675.8" width="26.3" height="1.6" fill="#9a765e" opacity="0.45"/><rect x="373.0" y="677.4" width="26.3" height="1.4" fill="#160b06" opacity="0.225"/><rect x="373.0" y="690.9" width="26.3" height="1.6" fill="#9a765e" opacity="0.45"/><rect x="373.0" y="692.5" width="26.3" height="1.4" fill="#160b06" opacity="0.225"/><rect x="373.0" y="706.0" width="26.3" height="1.6" fill="#9a765e" opacity="0.45"/><rect x="373.0" y="707.6" width="26.3" height="1.4" fill="#160b06" opacity="0.225"/><rect x="373.0" y="721.1" width="26.3" height="1.6" fill="#9a765e" opacity="0.45"/><rect x="373.0" y="722.7" width="26.3" height="1.4" fill="#160b06" opacity="0.225"/><rect x="373.0" y="736.2" width="26.3" height="1.6" fill="#9a765e" opacity="0.45"/><rect x="373.0" y="737.8" width="26.3" height="1.4" fill="#160b06" opacity="0.225"/><rect x="373.0" y="751.3" width="26.3" height="1.6" fill="#9a765e" opacity="0.45"/><rect x="373.0" y="752.9" width="26.3" height="1.4" fill="#160b06" opacity="0.225"/><rect x="373.0" y="626.0" width="26.3" height="131.5" fill="url(#sh)"/><rect x="373.0" y="626.0" width="1.0" height="131.5" fill="#080403" opacity="0.55"/><rect x="400.3" y="626.0" width="26.8" height="131.5" fill="#523228"/><rect x="400.3" y="645.6" width="26.8" height="1.6" fill="#9a765e" opacity="0.45"/><rect x="400.3" y="647.2" width="26.8" height="1.4" fill="#160b06" opacity="0.225"/><rect x="400.3" y="660.7" width="26.8" height="1.6" fill="#9a765e" opacity="0.45"/><rect x="400.3" y="662.3" width="26.8" height="1.4" fill="#160b06" opacity="0.225"/><rect x="400.3" y="675.8" width="26.8" height="1.6" fill="#9a765e" opacity="0.45"/><rect x="400.3" y="677.4" width="26.8" height="1.4" fill="#160b06" opacity="0.225"/><rect x="400.3" y="690.9" width="26.8" height="1.6" fill="#9a765e" opacity="0.45"/><rect x="400.3" y="692.5" width="26.8" height="1.4" fill="#160b06" opacity="0.225"/><rect x="400.3" y="706.0" width="26.8" height="1.6" fill="#9a765e" opacity="0.45"/><rect x="400.3" y="707.6" width="26.8" height="1.4" fill="#160b06" opacity="0.225"/><rect x="400.3" y="721.1" width="26.8" height="1.6" fill="#9a765e" opacity="0.45"/><rect x="400.3" y="722.7" width="26.8" height="1.4" fill="#160b06" opacity="0.225"/><rect x="400.3" y="736.2" width="26.8" height="1.6" fill="#9a765e" opacity="0.45"/><rect x="400.3" y="737.8" width="26.8" height="1.4" fill="#160b06" opacity="0.225"/><rect x="400.3" y="751.3" width="26.8" height="1.6" fill="#9a765e" opacity="0.45"/><rect x="400.3" y="752.9" width="26.8" height="1.4" fill="#160b06" opacity="0.225"/><rect x="400.3" y="626.0" width="26.8" height="131.5" fill="url(#sh)"/><rect x="400.3" y="626.0" width="1.0" height="131.5" fill="#080403" opacity="0.55"/><rect x="428.2" y="626.0" width="28.4" height="131.5" fill="#523228"/><rect x="428.2" y="645.6" width="28.4" height="1.6" fill="#9a765e" opacity="0.45"/><rect x="428.2" y="647.2" width="28.4" height="1.4" fill="#160b06" opacity="0.225"/><rect x="428.2" y="660.7" width="28.4" height="1.6" fill="#9a765e" opacity="0.45"/><rect x="428.2" y="662.3" width="28.4" height="1.4" fill="#160b06" opacity="0.225"/><rect x="428.2" y="675.8" width="28.4" height="1.6" fill="#9a765e" opacity="0.45"/><rect x="428.2" y="677.4" width="28.4" height="1.4" fill="#160b06" opacity="0.225"/><rect x="428.2" y="690.9" width="28.4" height="1.6" fill="#9a765e" opacity="0.45"/><rect x="428.2" y="692.5" width="28.4" height="1.4" fill="#160b06" opacity="0.225"/><rect x="428.2" y="706.0" width="28.4" height="1.6" fill="#9a765e" opacity="0.45"/><rect x="428.2" y="707.6" width="28.4" height="1.4" fill="#160b06" opacity="0.225"/><rect x="428.2" y="721.1" width="28.4" height="1.6" fill="#9a765e" opacity="0.45"/><rect x="428.2" y="722.7" width="28.4" height="1.4" fill="#160b06" opacity="0.225"/><rect x="428.2" y="736.2" width="28.4" height="1.6" fill="#9a765e" opacity="0.45"/><rect x="428.2" y="737.8" width="28.4" height="1.4" fill="#160b06" opacity="0.225"/><rect x="428.2" y="751.3" width="28.4" height="1.6" fill="#9a765e" opacity="0.45"/><rect x="428.2" y="752.9" width="28.4" height="1.4" fill="#160b06" opacity="0.225"/><rect x="428.2" y="626.0" width="28.4" height="131.5" fill="url(#sh)"/><rect x="428.2" y="626.0" width="1.0" height="131.5" fill="#080403" opacity="0.55"/><rect x="457.6" y="626.0" width="27.9" height="131.5" fill="#523228"/><rect x="457.6" y="645.6" width="27.9" height="1.6" fill="#9a765e" opacity="0.45"/><rect x="457.6" y="647.2" width="27.9" height="1.4" fill="#160b06" opacity="0.225"/><rect x="457.6" y="660.7" width="27.9" height="1.6" fill="#9a765e" opacity="0.45"/><rect x="457.6" y="662.3" width="27.9" height="1.4" fill="#160b06" opacity="0.225"/><rect x="457.6" y="675.8" width="27.9" height="1.6" fill="#9a765e" opacity="0.45"/><rect x="457.6" y="677.4" width="27.9" height="1.4" fill="#160b06" opacity="0.225"/><rect x="457.6" y="690.9" width="27.9" height="1.6" fill="#9a765e" opacity="0.45"/><rect x="457.6" y="692.5" width="27.9" height="1.4" fill="#160b06" opacity="0.225"/><rect x="457.6" y="706.0" width="27.9" height="1.6" fill="#9a765e" opacity="0.45"/><rect x="457.6" y="707.6" width="27.9" height="1.4" fill="#160b06" opacity="0.225"/><rect x="457.6" y="721.1" width="27.9" height="1.6" fill="#9a765e" opacity="0.45"/><rect x="457.6" y="722.7" width="27.9" height="1.4" fill="#160b06" opacity="0.225"/><rect x="457.6" y="736.2" width="27.9" height="1.6" fill="#9a765e" opacity="0.45"/><rect x="457.6" y="737.8" width="27.9" height="1.4" fill="#160b06" opacity="0.225"/><rect x="457.6" y="751.3" width="27.9" height="1.6" fill="#9a765e" opacity="0.45"/><rect x="457.6" y="752.9" width="27.9" height="1.4" fill="#160b06" opacity="0.225"/><rect x="457.6" y="626.0" width="27.9" height="131.5" fill="url(#sh)"/><rect x="457.6" y="626.0" width="1.0" height="131.5" fill="#080403" opacity="0.55"/><rect x="486.5" y="626.0" width="6.8" height="131.5" fill="#523228"/><rect x="486.5" y="645.6" width="6.8" height="1.6" fill="#9a765e" opacity="0.45"/><rect x="486.5" y="647.2" width="6.8" height="1.4" fill="#160b06" opacity="0.225"/><rect x="486.5" y="660.7" width="6.8" height="1.6" fill="#9a765e" opacity="0.45"/><rect x="486.5" y="662.3" width="6.8" height="1.4" fill="#160b06" opacity="0.225"/><rect x="486.5" y="675.8" width="6.8" height="1.6" fill="#9a765e" opacity="0.45"/><rect x="486.5" y="677.4" width="6.8" height="1.4" fill="#160b06" opacity="0.225"/><rect x="486.5" y="690.9" width="6.8" height="1.6" fill="#9a765e" opacity="0.45"/><rect x="486.5" y="692.5" width="6.8" height="1.4" fill="#160b06" opacity="0.225"/><rect x="486.5" y="706.0" width="6.8" height="1.6" fill="#9a765e" opacity="0.45"/><rect x="486.5" y="707.6" width="6.8" height="1.4" fill="#160b06" opacity="0.225"/><rect x="486.5" y="721.1" width="6.8" height="1.6" fill="#9a765e" opacity="0.45"/><rect x="486.5" y="722.7" width="6.8" height="1.4" fill="#160b06" opacity="0.225"/><rect x="486.5" y="736.2" width="6.8" height="1.6" fill="#9a765e" opacity="0.45"/><rect x="486.5" y="737.8" width="6.8" height="1.4" fill="#160b06" opacity="0.225"/><rect x="486.5" y="751.3" width="6.8" height="1.6" fill="#9a765e" opacity="0.45"/><rect x="486.5" y="752.9" width="6.8" height="1.4" fill="#160b06" opacity="0.225"/><rect x="486.5" y="626.0" width="6.8" height="131.5" fill="url(#sh)"/><rect x="486.5" y="626.0" width="1.0" height="131.5" fill="#080403" opacity="0.55"/><rect x="0.0" y="758.0" width="494.0" height="2.0" fill="#080403"/><rect x="0" y="0" width="494" height="760" filter="url(#nz)" opacity=".4"/></svg><!--/SHELF--></div>

<!-- banner -->
<div class="abs" style="left:606px;top:0;width:356px;height:27px;background:#23d65c;border-bottom-left-radius:4px"></div>
<div class="abs" style="left:962px;top:0;width:218px;height:27px;background:#232326;border-bottom-right-radius:4px"></div>
<div class="t" style="left:627px;top:7px;font-size:14.5px;font-weight:bold;color:#3a3a40">Вы просматриваете экран Алексей Чернов</div>
<div class="t" style="left:997px;top:7px;font-size:14.4px;font-weight:bold;color:#fff">Настройки просмотра</div>
<svg class="abs" style="left:1158px;top:10px" width="10" height="8" viewBox="0 0 10 8"><path d="M1.5 2 L5 5.5 L8.5 2" stroke="#fff" stroke-width="1.6" fill="none"/></svg>

<!-- view button -->
<div class="abs" style="left:1849px;top:8px;width:61px;height:33px;border-radius:8px;background:#232323"></div>
<svg class="abs" style="left:1858px;top:15px" width="14" height="15" viewBox="0 0 14 15"><rect x="0" y="1" width="3.8" height="3.6" fill="#d8d8d8"/><rect x="4.6" y="1" width="3.8" height="3.6" fill="#d8d8d8"/><rect x="9.2" y="1" width="3.8" height="3.6" fill="#d8d8d8"/><rect x="0" y="6" width="13" height="8" fill="#d8d8d8"/></svg>
<div class="t" style="left:1876px;top:14px;font-size:15px;color:#e8e8e8">Вид</div>

<!-- participant tile -->
<div class="abs" style="left:1638px;top:107px;width:281px;height:164px;background:#232323"></div>
<div class="t" style="left:1684px;top:179px;font-size:23.4px;font-weight:bold;color:#fff">Алексей Чернов</div>
<div class="abs" style="left:1638px;top:244px;width:126px;height:24px;background:#2a2a2a"></div>
<div class="t" style="left:1643px;top:249px;font-size:15px;letter-spacing:.12px;color:#fff">Алексей Чернов</div>

<!-- slide text -->
<div class="t" style="left:344px;top:225px;font-size:17px;letter-spacing:.5px;color:#2b2118">Учебный проект №2:<span style="font-family:'Liberation Serif',serif;font-size:19.6px;letter-spacing:0"> Посещение&nbsp; инклюзивными волонтерами общеобразовательной школы</span></div>
<div class="t" style="left:344px;top:247px;font-size:19.6px;letter-spacing:.2px;color:#2b2118;font-family:'Liberation Serif',serif">в рамках события</div>

<div class="t" style="left:343px;top:454px;font-size:66px;letter-spacing:.4px;font-weight:bold;color:#000;-webkit-text-stroke:.9px #000;text-shadow:2.5px 2.5px 2.5px rgba(60,40,20,.6)">Литературный</div>
<div class="t" style="left:344px;top:535px;font-size:66px;letter-spacing:1.1px;font-weight:bold;color:#000;-webkit-text-stroke:.9px #000;text-shadow:2.5px 2.5px 2.5px rgba(60,40,20,.6)">вечер</div>

<div class="t" style="left:944px;top:781.5px;font-size:23px;color:#1e1610;letter-spacing:.5px">Выполнили</div>
<div class="t" style="left:944px;top:812.5px;font-size:23px;color:#1e1610;letter-spacing:0px">Соколова Дарья</div>
<div class="t" style="left:944px;top:843px;font-size:23px;color:#1e1610;letter-spacing:.47px">Айметов Дамир</div>
<div class="t" style="left:944px;top:873px;font-size:23px;color:#1e1610;letter-spacing:0px">Чернов Алексей</div>


<!-- cursor -->
<svg class="abs" style="left:860px;top:320px" width="30" height="35" viewBox="860 320 30 35">
<path d="M869.6 327.6 L869.6 344.4 L873.6 340.6 L876.6 346.4 L879.2 345.2 L876.4 339.6 L881.4 339.4 Z" fill="#fff" stroke="#111" stroke-width="1.1" stroke-linejoin="round"/>
</svg>
<!-- faint slide controls -->
<svg class="abs" style="left:285px;top:870px;opacity:.14" width="160" height="50" viewBox="0 0 160 50">
<path d="M9 28 L14 23 V26 H24 V31 H14 V34 Z" fill="#f6d8a8"/>
<path d="M45 33 L58 20" stroke="#f6d8a8" stroke-width="2.5"/>
<rect x="82" y="23" width="16" height="12" fill="#f6d8a8"/>
<path d="M140 28 L135 23 V26 H125 V31 H135 V34 Z" fill="#f6d8a8"/>
</svg>

<!-- toolbar -->
<div class="t lbl" style="left:13px;top:1058px;letter-spacing:.5px">Включить звук</div>
<div class="t lbl" style="left:153px;top:1058px;letter-spacing:.25px">Начать видео</div>
<div class="t lbl" style="left:619px;top:1058px;letter-spacing:.45px">Участники</div>
<div class="t lbl" style="left:677px;top:1026px">20</div>
<div class="t lbl" style="left:782px;top:1058px">Чат</div>
<div class="t lbl" style="left:861px;top:1058px;letter-spacing:.24px;color:#2ad35c">Демонстрация экрана</div>
<div class="t lbl" style="left:1053px;top:1058px">Запись</div>
<div class="t lbl" style="left:1138px;top:1058px;letter-spacing:.2px">Показать субтитры</div>
<div class="t lbl" style="left:1302px;top:1058px;letter-spacing:.5px">Реакции</div>
<div class="t lbl" style="left:1392px;top:1058px;letter-spacing:.7px">Приложения</div>

<div class="abs" style="left:1828px;top:1030px;width:77px;height:34px;border-radius:8px;background:#b92328"></div>
<div class="t" style="left:1843px;top:1039.5px;font-size:15.5px;letter-spacing:-.7px;font-weight:bold;color:#fff">Выйти</div>


<!-- toolbar icons -->
<svg class="abs" style="left:0;top:0;pointer-events:none" width="1920" height="1080" viewBox="0 0 1920 1080">
<g fill="none" stroke="#acacac" stroke-width="1.8" stroke-linecap="round" stroke-linejoin="round">
<path d="M108.1 1037.4 L111.9 1033.8 L115.8 1037.5"/>
<path d="M256.1 1037.4 L259.9 1033.8 L263.8 1037.5"/>
<path d="M718.1 1037.4 L721.9 1033.8 L725.8 1037.5"/>
<path d="M831.1 1037.4 L834.9 1033.8 L838.8 1037.5"/>
<path d="M1262.1 1037.4 L1265.9 1033.8 L1269.8 1037.5"/>
</g>
<!-- mic -->
<rect x="60" y="1022" width="10" height="19.5" rx="5" fill="#acacac"/>
<path d="M57 1035 A8 8 0 0 0 73 1035" fill="none" stroke="#acacac" stroke-width="2"/>
<path d="M65 1042.5 V1048.5 M60.5 1048.8 H69.5" stroke="#acacac" stroke-width="2" fill="none" stroke-linecap="round"/>
<path d="M51 1049.5 L79 1022" stroke="#1a1a1a" stroke-width="4.5"/>
<path d="M51 1049.5 L79 1022" stroke="#f25b5e" stroke-width="2" stroke-linecap="round"/>
<!-- video -->
<rect x="187" y="1027" width="21" height="18" rx="3.5" fill="#acacac"/>
<path d="M210.5 1032.5 L215.5 1028.5 Q217 1028 217 1030 V1042 Q217 1044 215.5 1043.5 L210.5 1040 Z" fill="#acacac"/>
<path d="M188 1049.5 L216 1022" stroke="#1a1a1a" stroke-width="4.5"/>
<path d="M188 1049.5 L216 1022" stroke="#f25b5e" stroke-width="2" stroke-linecap="round"/>
<!-- people -->
<circle cx="650.4" cy="1030.1" r="4.9" fill="#acacac"/>
<circle cx="662.6" cy="1032.6" r="4.6" fill="#acacac"/>
<path d="M660.9 1047 H667 A4 4 0 0 0 671.1 1043 C671 1040.5 668 1040 665 1040 H660.5 Z" fill="#acacac"/>
<path d="M641.1 1043.5 C641.1 1039.5 645.5 1037.9 650.4 1037.9 C655.3 1037.9 659.6 1039.5 659.6 1043.5 C659.6 1046 658 1047 655.5 1047 H645 C642.5 1047 641.1 1046 641.1 1043.5 Z" fill="#acacac" stroke="#1a1a1a" stroke-width="1.5"/>
<!-- chat -->
<path d="M785.5 1024.8 H802 A4 4 0 0 1 806 1028.8 V1037.6 A4 4 0 0 1 802 1041.6 H792.8 L787.2 1047.2 L786 1041.4 A4.5 4.5 0 0 1 781.7 1037.2 V1028.8 A4 4 0 0 1 785.5 1024.8 Z" fill="#acacac"/>
<rect x="797" y="1016.3" width="22" height="20.7" rx="7" fill="#1a1a1a"/>
<rect x="798.3" y="1017.6" width="19.3" height="18.1" rx="6" fill="#fb4343"/>
<text x="808" y="1032.2" font-family="Liberation Sans" font-weight="bold" font-size="14" fill="#fff" text-anchor="middle">8</text>
<!-- share -->
<rect x="924.1" y="1024.6" width="30" height="22.4" rx="3.5" fill="#22dc5c"/>
<path d="M939 1041.3 V1031 M934.8 1035.3 L939 1031 L943.3 1035.3" stroke="#1b0f14" stroke-width="2.1" fill="none" stroke-linecap="round" stroke-linejoin="round"/>
<!-- record -->
<circle cx="1078" cy="1035.9" r="11.3" fill="none" stroke="#acacac" stroke-width="2.1"/>
<circle cx="1078" cy="1035.9" r="8.7" fill="#acacac"/>
<!-- cc -->
<rect x="1190" y="1024.6" width="30" height="22.4" rx="3.5" fill="#acacac"/>
<text x="1205" y="1040.6" font-family="Liberation Sans" font-weight="bold" font-size="13" fill="#1a1a1a" text-anchor="middle">CC</text>
<!-- reactions -->
<circle cx="1332" cy="1035.9" r="11.3" fill="#acacac"/>
<circle cx="1342.4" cy="1025.7" r="6.3" fill="#1a1a1a"/>
<path d="M1342.4 1021.3 V1030.1 M1338 1025.7 H1346.8" stroke="#acacac" stroke-width="1.8" stroke-linecap="round"/>
<circle cx="1329.1" cy="1034.4" r="1.5" fill="#1a1a1a"/>
<circle cx="1335.2" cy="1034.4" r="1.5" fill="#1a1a1a"/>
<path d="M1327.5 1038 Q1332 1042.5 1336.7 1038" stroke="#1a1a1a" stroke-width="1.8" fill="none" stroke-linecap="round"/>
<!-- apps -->
<g fill="none" stroke="#acacac" stroke-width="2" stroke-linecap="round">
<path d="M1429.3 1037.6 V1032 A3.5 3.5 0 0 1 1432.8 1028.5 H1438.7"/>
<path d="M1446.7 1037 V1042.2 A3.5 3.5 0 0 1 1443.2 1045.7 H1438"/>
<circle cx="1444.3" cy="1030.9" r="2.9"/>
<circle cx="1431.7" cy="1043.5" r="2.9"/>
</g>
</svg>

</body></html>
